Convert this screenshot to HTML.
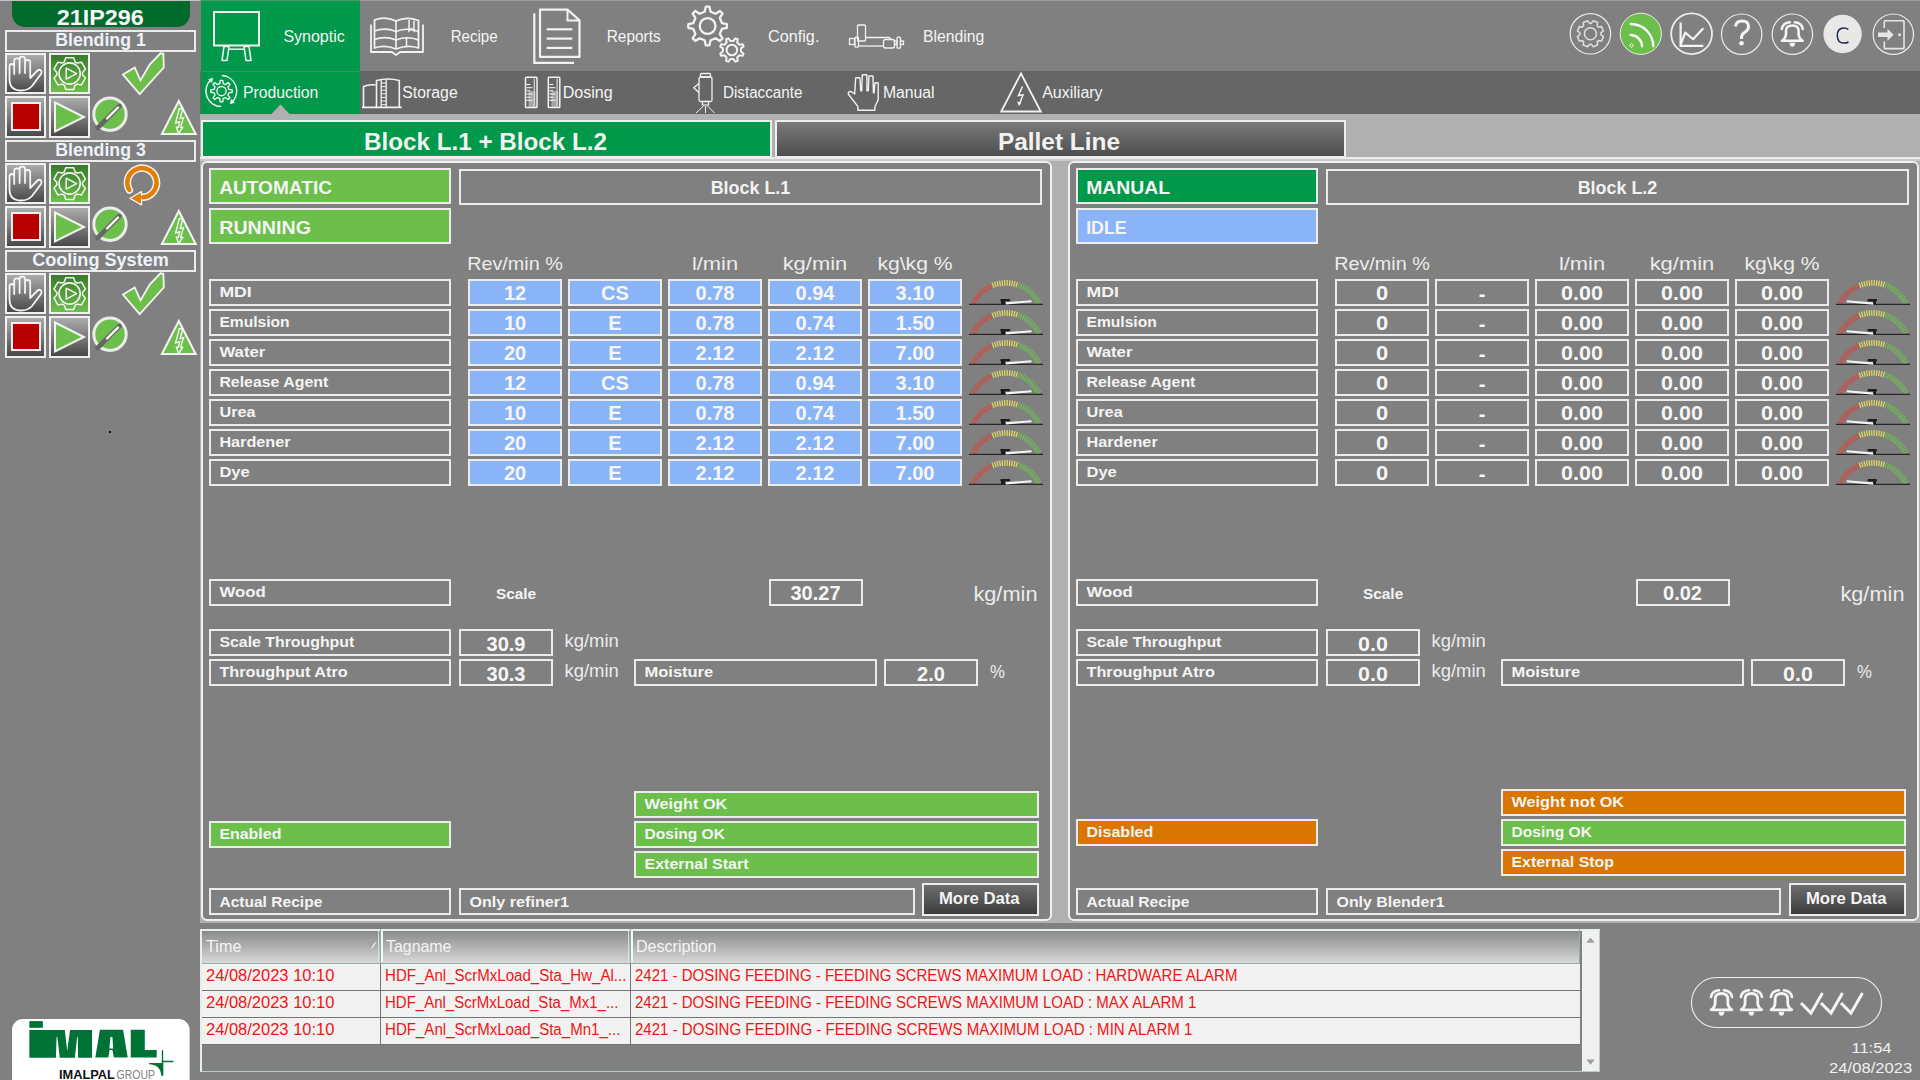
<!DOCTYPE html><html><head><meta charset="utf-8"><style>
*{margin:0;padding:0;box-sizing:border-box}
html,body{width:1920px;height:1080px;overflow:hidden;background:#808080;font-family:"Liberation Sans", sans-serif;}
.ab{position:absolute}
.bx{position:absolute;border:2px solid #ececec}
.blue{background:#8ab4f8}
.lg{background:#6cbf4a}
.dg{background:#00984a}
.or{background:#d97600}
.btn{position:absolute;border:2px solid #f0f0f0;background:linear-gradient(#acacac,#484848)}
svg text{font-family:"Liberation Sans";white-space:pre}
</style></head><body>

<div class="ab" style="left:200px;top:114px;width:1720px;height:809px;background:#b0b0b0"></div>
<div class="ab" style="left:200px;top:71px;width:1720px;height:43px;background:#666666"></div>
<div class="ab" style="left:0;top:0;width:200px;height:1px;background:#c2c2c2"></div>
<div class="ab" style="left:200px;top:0;width:1720px;height:1px;background:#9a9a9a"></div>
<div class="ab" style="left:201px;top:0;width:159px;height:1px;background:#50946c"></div>
<div class="ab" style="left:201px;top:1px;width:159px;height:70px;background:#00984a"></div>
<div class="ab" style="left:201px;top:71px;width:159px;height:1px;background:#4a8a5f"></div>
<div class="ab" style="left:201px;top:72px;width:159px;height:42px;background:#00984a"></div>
<svg class="ab" style="left:270px;top:104px" width="22" height="11"><polygon points="1,10.5 10.5,0.5 20,10.5" fill="#b0b0b0"/></svg>
<div class="ab" style="left:201px;top:120px;width:571px;height:38px;border:2px solid #eeeeee;background:#00984a"></div>
<div class="ab" style="left:775px;top:120px;width:571px;height:38px;border:2px solid #eeeeee;background:linear-gradient(#7a7a7a,#4e4e4e)"></div>
<div class="ab" style="left:200px;top:157px;width:1720px;height:2px;background:#ececec"></div>
<div class="ab" style="left:200px;top:159px;width:1720px;height:2px;background:#cacaca"></div>
<div class="ab" style="left:201px;top:161px;width:851px;height:760px;border:2px solid #efefef;border-radius:6px;background:#808080"></div>
<div class="ab" style="left:1068px;top:161px;width:851px;height:760px;border:2px solid #efefef;border-radius:6px;background:#808080"></div>
<div class="bx lg" style="left:209px;top:168px;width:242px;height:36px"></div>
<div class="bx lg" style="left:209px;top:208px;width:242px;height:36px"></div>
<div class="bx" style="left:459px;top:169px;width:583px;height:36px"></div>
<div class="bx" style="left:209px;top:279px;width:242px;height:27px"></div>
<div class="bx blue" style="left:468px;top:279px;width:94px;height:27px"></div>
<div class="bx blue" style="left:568px;top:279px;width:94px;height:27px"></div>
<div class="bx blue" style="left:668px;top:279px;width:94px;height:27px"></div>
<div class="bx blue" style="left:768px;top:279px;width:94px;height:27px"></div>
<div class="bx blue" style="left:868px;top:279px;width:94px;height:27px"></div>
<div class="bx" style="left:209px;top:309px;width:242px;height:27px"></div>
<div class="bx blue" style="left:468px;top:309px;width:94px;height:27px"></div>
<div class="bx blue" style="left:568px;top:309px;width:94px;height:27px"></div>
<div class="bx blue" style="left:668px;top:309px;width:94px;height:27px"></div>
<div class="bx blue" style="left:768px;top:309px;width:94px;height:27px"></div>
<div class="bx blue" style="left:868px;top:309px;width:94px;height:27px"></div>
<div class="bx" style="left:209px;top:339px;width:242px;height:27px"></div>
<div class="bx blue" style="left:468px;top:339px;width:94px;height:27px"></div>
<div class="bx blue" style="left:568px;top:339px;width:94px;height:27px"></div>
<div class="bx blue" style="left:668px;top:339px;width:94px;height:27px"></div>
<div class="bx blue" style="left:768px;top:339px;width:94px;height:27px"></div>
<div class="bx blue" style="left:868px;top:339px;width:94px;height:27px"></div>
<div class="bx" style="left:209px;top:369px;width:242px;height:27px"></div>
<div class="bx blue" style="left:468px;top:369px;width:94px;height:27px"></div>
<div class="bx blue" style="left:568px;top:369px;width:94px;height:27px"></div>
<div class="bx blue" style="left:668px;top:369px;width:94px;height:27px"></div>
<div class="bx blue" style="left:768px;top:369px;width:94px;height:27px"></div>
<div class="bx blue" style="left:868px;top:369px;width:94px;height:27px"></div>
<div class="bx" style="left:209px;top:399px;width:242px;height:27px"></div>
<div class="bx blue" style="left:468px;top:399px;width:94px;height:27px"></div>
<div class="bx blue" style="left:568px;top:399px;width:94px;height:27px"></div>
<div class="bx blue" style="left:668px;top:399px;width:94px;height:27px"></div>
<div class="bx blue" style="left:768px;top:399px;width:94px;height:27px"></div>
<div class="bx blue" style="left:868px;top:399px;width:94px;height:27px"></div>
<div class="bx" style="left:209px;top:429px;width:242px;height:27px"></div>
<div class="bx blue" style="left:468px;top:429px;width:94px;height:27px"></div>
<div class="bx blue" style="left:568px;top:429px;width:94px;height:27px"></div>
<div class="bx blue" style="left:668px;top:429px;width:94px;height:27px"></div>
<div class="bx blue" style="left:768px;top:429px;width:94px;height:27px"></div>
<div class="bx blue" style="left:868px;top:429px;width:94px;height:27px"></div>
<div class="bx" style="left:209px;top:459px;width:242px;height:27px"></div>
<div class="bx blue" style="left:468px;top:459px;width:94px;height:27px"></div>
<div class="bx blue" style="left:568px;top:459px;width:94px;height:27px"></div>
<div class="bx blue" style="left:668px;top:459px;width:94px;height:27px"></div>
<div class="bx blue" style="left:768px;top:459px;width:94px;height:27px"></div>
<div class="bx blue" style="left:868px;top:459px;width:94px;height:27px"></div>
<div class="bx" style="left:209px;top:579px;width:242px;height:27px"></div>
<div class="bx" style="left:769px;top:579px;width:94px;height:27px"></div>
<div class="bx" style="left:209px;top:629px;width:242px;height:27px"></div>
<div class="bx" style="left:459px;top:629px;width:94px;height:27px"></div>
<div class="bx" style="left:209px;top:659px;width:242px;height:27px"></div>
<div class="bx" style="left:459px;top:659px;width:94px;height:27px"></div>
<div class="bx" style="left:634px;top:659px;width:243px;height:27px"></div>
<div class="bx" style="left:884px;top:659px;width:94px;height:27px"></div>
<div class="bx lg" style="left:634px;top:791px;width:405px;height:27px"></div>
<div class="bx lg" style="left:634px;top:821px;width:405px;height:27px"></div>
<div class="bx lg" style="left:634px;top:851px;width:405px;height:27px"></div>
<div class="bx lg" style="left:209px;top:821px;width:242px;height:27px"></div>
<div class="bx" style="left:209px;top:888px;width:242px;height:27px"></div>
<div class="bx" style="left:459px;top:888px;width:456px;height:27px"></div>
<div class="bx" style="left:922px;top:883px;width:117px;height:33px;background:linear-gradient(#6e6e6e,#3c3c3c)"></div>
<div class="bx dg" style="left:1076px;top:168px;width:242px;height:36px"></div>
<div class="bx blue" style="left:1076px;top:208px;width:242px;height:36px"></div>
<div class="bx" style="left:1326px;top:169px;width:583px;height:36px"></div>
<div class="bx" style="left:1076px;top:279px;width:242px;height:27px"></div>
<div class="bx " style="left:1335px;top:279px;width:94px;height:27px"></div>
<div class="bx " style="left:1435px;top:279px;width:94px;height:27px"></div>
<div class="bx " style="left:1535px;top:279px;width:94px;height:27px"></div>
<div class="bx " style="left:1635px;top:279px;width:94px;height:27px"></div>
<div class="bx " style="left:1735px;top:279px;width:94px;height:27px"></div>
<div class="bx" style="left:1076px;top:309px;width:242px;height:27px"></div>
<div class="bx " style="left:1335px;top:309px;width:94px;height:27px"></div>
<div class="bx " style="left:1435px;top:309px;width:94px;height:27px"></div>
<div class="bx " style="left:1535px;top:309px;width:94px;height:27px"></div>
<div class="bx " style="left:1635px;top:309px;width:94px;height:27px"></div>
<div class="bx " style="left:1735px;top:309px;width:94px;height:27px"></div>
<div class="bx" style="left:1076px;top:339px;width:242px;height:27px"></div>
<div class="bx " style="left:1335px;top:339px;width:94px;height:27px"></div>
<div class="bx " style="left:1435px;top:339px;width:94px;height:27px"></div>
<div class="bx " style="left:1535px;top:339px;width:94px;height:27px"></div>
<div class="bx " style="left:1635px;top:339px;width:94px;height:27px"></div>
<div class="bx " style="left:1735px;top:339px;width:94px;height:27px"></div>
<div class="bx" style="left:1076px;top:369px;width:242px;height:27px"></div>
<div class="bx " style="left:1335px;top:369px;width:94px;height:27px"></div>
<div class="bx " style="left:1435px;top:369px;width:94px;height:27px"></div>
<div class="bx " style="left:1535px;top:369px;width:94px;height:27px"></div>
<div class="bx " style="left:1635px;top:369px;width:94px;height:27px"></div>
<div class="bx " style="left:1735px;top:369px;width:94px;height:27px"></div>
<div class="bx" style="left:1076px;top:399px;width:242px;height:27px"></div>
<div class="bx " style="left:1335px;top:399px;width:94px;height:27px"></div>
<div class="bx " style="left:1435px;top:399px;width:94px;height:27px"></div>
<div class="bx " style="left:1535px;top:399px;width:94px;height:27px"></div>
<div class="bx " style="left:1635px;top:399px;width:94px;height:27px"></div>
<div class="bx " style="left:1735px;top:399px;width:94px;height:27px"></div>
<div class="bx" style="left:1076px;top:429px;width:242px;height:27px"></div>
<div class="bx " style="left:1335px;top:429px;width:94px;height:27px"></div>
<div class="bx " style="left:1435px;top:429px;width:94px;height:27px"></div>
<div class="bx " style="left:1535px;top:429px;width:94px;height:27px"></div>
<div class="bx " style="left:1635px;top:429px;width:94px;height:27px"></div>
<div class="bx " style="left:1735px;top:429px;width:94px;height:27px"></div>
<div class="bx" style="left:1076px;top:459px;width:242px;height:27px"></div>
<div class="bx " style="left:1335px;top:459px;width:94px;height:27px"></div>
<div class="bx " style="left:1435px;top:459px;width:94px;height:27px"></div>
<div class="bx " style="left:1535px;top:459px;width:94px;height:27px"></div>
<div class="bx " style="left:1635px;top:459px;width:94px;height:27px"></div>
<div class="bx " style="left:1735px;top:459px;width:94px;height:27px"></div>
<div class="bx" style="left:1076px;top:579px;width:242px;height:27px"></div>
<div class="bx" style="left:1636px;top:579px;width:94px;height:27px"></div>
<div class="bx" style="left:1076px;top:629px;width:242px;height:27px"></div>
<div class="bx" style="left:1326px;top:629px;width:94px;height:27px"></div>
<div class="bx" style="left:1076px;top:659px;width:242px;height:27px"></div>
<div class="bx" style="left:1326px;top:659px;width:94px;height:27px"></div>
<div class="bx" style="left:1501px;top:659px;width:243px;height:27px"></div>
<div class="bx" style="left:1751px;top:659px;width:94px;height:27px"></div>
<div class="bx or" style="left:1501px;top:789px;width:405px;height:27px"></div>
<div class="bx lg" style="left:1501px;top:819px;width:405px;height:27px"></div>
<div class="bx or" style="left:1501px;top:849px;width:405px;height:27px"></div>
<div class="bx or" style="left:1076px;top:819px;width:242px;height:27px"></div>
<div class="bx" style="left:1076px;top:888px;width:242px;height:27px"></div>
<div class="bx" style="left:1326px;top:888px;width:455px;height:27px"></div>
<div class="bx" style="left:1789px;top:883px;width:117px;height:33px;background:linear-gradient(#6e6e6e,#3c3c3c)"></div>
<div class="ab" style="left:12px;top:1px;width:178px;height:26px;background:#006b2c;border-radius:0 0 13px 13px"></div>
<div class="ab" style="left:5px;top:30px;width:191px;height:22px;border:2px solid #ececec"></div>
<div class="btn" style="left:5px;top:53px;width:41px;height:41px"></div>
<div class="ab" style="left:49px;top:53px;width:41px;height:41px;border:2px solid #f0f0f0;background:linear-gradient(#3b7a2c,#6cbf4a)"></div>
<div class="btn" style="left:5px;top:96px;width:41px;height:41.5px"></div>
<div class="ab" style="left:10.5px;top:102px;width:30px;height:29px;border:2px solid #f0f0f0;background:#b80000"></div>
<div class="btn" style="left:49px;top:96px;width:41px;height:41.5px"></div>
<div class="ab" style="left:5px;top:140px;width:191px;height:22px;border:2px solid #ececec"></div>
<div class="btn" style="left:5px;top:163px;width:41px;height:41px"></div>
<div class="ab" style="left:49px;top:163px;width:41px;height:41px;border:2px solid #f0f0f0;background:linear-gradient(#3b7a2c,#6cbf4a)"></div>
<div class="btn" style="left:5px;top:206px;width:41px;height:41.5px"></div>
<div class="ab" style="left:10.5px;top:212px;width:30px;height:29px;border:2px solid #f0f0f0;background:#b80000"></div>
<div class="btn" style="left:49px;top:206px;width:41px;height:41.5px"></div>
<div class="ab" style="left:5px;top:250px;width:191px;height:22px;border:2px solid #ececec"></div>
<div class="btn" style="left:5px;top:273px;width:41px;height:41px"></div>
<div class="ab" style="left:49px;top:273px;width:41px;height:41px;border:2px solid #f0f0f0;background:linear-gradient(#3b7a2c,#6cbf4a)"></div>
<div class="btn" style="left:5px;top:316px;width:41px;height:41.5px"></div>
<div class="ab" style="left:10.5px;top:322px;width:30px;height:29px;border:2px solid #f0f0f0;background:#b80000"></div>
<div class="btn" style="left:49px;top:316px;width:41px;height:41.5px"></div>
<div class="ab" style="left:109px;top:431px;width:2px;height:2px;background:#111"></div>
<div class="ab" style="left:200px;top:929px;width:1400px;height:143px;border:2px solid #e6eeee;border-right:1px solid #b8cccc;border-bottom:1px solid #b8cccc;background:#808080"></div>
<div class="ab" style="left:202px;top:931px;width:1378px;height:32px;background:linear-gradient(#8a8a8a,#d8d8d8)"></div>
<div class="ab" style="left:202px;top:963px;width:1378px;height:1px;background:#8fb0b0"></div>
<div class="ab" style="left:378px;top:931px;width:1px;height:31px;background:#dedede"></div>
<div class="ab" style="left:380px;top:929px;width:1px;height:34px;background:#8fb0b0"></div>
<div class="ab" style="left:381px;top:931px;width:1.5px;height:31px;background:#f4f8f8"></div>
<div class="ab" style="left:628px;top:931px;width:1px;height:31px;background:#dedede"></div>
<div class="ab" style="left:630px;top:929px;width:1px;height:34px;background:#8fb0b0"></div>
<div class="ab" style="left:631px;top:931px;width:1.5px;height:31px;background:#f4f8f8"></div>
<div class="ab" style="left:1579px;top:929px;width:1px;height:34px;background:#8fb0b0"></div>
<div class="ab" style="left:202px;top:964px;width:1378px;height:27px;background:#f2f2f2;border-bottom:1px solid #747474"></div>
<div class="ab" style="left:380px;top:964px;width:1px;height:27px;background:#747474"></div>
<div class="ab" style="left:630px;top:964px;width:1px;height:27px;background:#747474"></div>
<div class="ab" style="left:202px;top:991px;width:1378px;height:27px;background:#f2f2f2;border-bottom:1px solid #747474"></div>
<div class="ab" style="left:380px;top:991px;width:1px;height:27px;background:#747474"></div>
<div class="ab" style="left:630px;top:991px;width:1px;height:27px;background:#747474"></div>
<div class="ab" style="left:202px;top:1018px;width:1378px;height:27px;background:#f2f2f2;border-bottom:1px solid #747474"></div>
<div class="ab" style="left:380px;top:1018px;width:1px;height:27px;background:#747474"></div>
<div class="ab" style="left:630px;top:1018px;width:1px;height:27px;background:#747474"></div>
<div class="ab" style="left:1582px;top:931px;width:17px;height:140px;background:#f0f0f0"></div>
<svg class="ab" style="left:1582px;top:931px" width="17" height="141"><polygon points="4.3,11.8 8.5,6.6 12.7,11.8" fill="#a0a0a0"/><polygon points="4.3,128.6 8.5,133.8 12.7,128.6" fill="#a0a0a0"/></svg>
<svg class="ab" style="left:0;top:0" width="1920" height="1080" viewBox="0 0 1920 1080">
<text x="485.5" y="149.5" font-size="24" font-weight="bold" fill="#f2f2f2" text-anchor="middle" textLength="243.2" lengthAdjust="spacingAndGlyphs">Block L.1 + Block L.2</text>
<text x="1059.0" y="149.5" font-size="24" font-weight="bold" fill="#f2f2f2" text-anchor="middle" textLength="122.2" lengthAdjust="spacingAndGlyphs">Pallet Line</text>
<text x="219.2" y="193.8" font-size="18.5" font-weight="bold" fill="#f4f4f4" textLength="112.8" lengthAdjust="spacingAndGlyphs">AUTOMATIC</text>
<text x="219.2" y="233.8" font-size="18.5" font-weight="bold" fill="#f4f4f4" textLength="91.8" lengthAdjust="spacingAndGlyphs">RUNNING</text>
<text x="750.5" y="193.8" font-size="18" font-weight="bold" fill="#f2f2f2" text-anchor="middle" textLength="79.6" lengthAdjust="spacingAndGlyphs">Block L.1</text>
<text x="515.0" y="270.0" font-size="18.5" font-weight="normal" fill="#ececec" text-anchor="middle" textLength="95.7" lengthAdjust="spacingAndGlyphs">Rev/min %</text>
<text x="715.0" y="270.0" font-size="18.5" font-weight="normal" fill="#ececec" text-anchor="middle" textLength="46.2" lengthAdjust="spacingAndGlyphs">l/min</text>
<text x="815.0" y="270.0" font-size="18.5" font-weight="normal" fill="#ececec" text-anchor="middle" textLength="64.7" lengthAdjust="spacingAndGlyphs">kg/min</text>
<text x="915.0" y="270.0" font-size="18.5" font-weight="normal" fill="#ececec" text-anchor="middle" textLength="75.2" lengthAdjust="spacingAndGlyphs">kg\kg %</text>
<text x="219.4" y="297.0" font-size="15" font-weight="bold" fill="#f4f4f4" textLength="32.3" lengthAdjust="spacingAndGlyphs">MDI</text>
<text x="515.0" y="299.7" font-size="20" font-weight="bold" fill="#f6f6f6" text-anchor="middle">12</text>
<text x="615.0" y="299.7" font-size="20" font-weight="bold" fill="#f6f6f6" text-anchor="middle">CS</text>
<text x="715.0" y="299.7" font-size="20" font-weight="bold" fill="#f6f6f6" text-anchor="middle">0.78</text>
<text x="815.0" y="299.7" font-size="20" font-weight="bold" fill="#f6f6f6" text-anchor="middle">0.94</text>
<text x="915.0" y="299.7" font-size="20" font-weight="bold" fill="#f6f6f6" text-anchor="middle">3.10</text>
<g transform="translate(968,278)"><line x1="3.04" y1="23.11" x2="7.98" y2="25.74" stroke="#d8443a" stroke-width="1.15"/><line x1="4.33" y1="20.86" x2="9.09" y2="23.80" stroke="#d8443a" stroke-width="1.15"/><line x1="5.77" y1="18.70" x2="10.33" y2="21.95" stroke="#d8443a" stroke-width="1.15"/><line x1="7.34" y1="16.63" x2="11.68" y2="20.18" stroke="#d8443a" stroke-width="1.15"/><line x1="9.05" y1="14.68" x2="13.15" y2="18.50" stroke="#d8443a" stroke-width="1.15"/><line x1="10.89" y1="12.84" x2="14.72" y2="16.92" stroke="#d8443a" stroke-width="1.15"/><line x1="12.84" y1="11.12" x2="16.39" y2="15.45" stroke="#d8443a" stroke-width="1.15"/><line x1="14.89" y1="9.54" x2="18.16" y2="14.09" stroke="#d8443a" stroke-width="1.15"/><line x1="17.05" y1="8.10" x2="20.01" y2="12.85" stroke="#d8443a" stroke-width="1.15"/><line x1="19.30" y1="6.79" x2="21.94" y2="11.73" stroke="#d8443a" stroke-width="1.15"/><line x1="21.63" y1="5.64" x2="23.94" y2="10.74" stroke="#d8443a" stroke-width="1.15"/><line x1="24.02" y1="4.65" x2="26.00" y2="9.89" stroke="#e9df5c" stroke-width="1.15"/><line x1="26.48" y1="3.81" x2="28.11" y2="9.17" stroke="#e9df5c" stroke-width="1.15"/><line x1="28.99" y1="3.14" x2="30.26" y2="8.59" stroke="#e9df5c" stroke-width="1.15"/><line x1="31.54" y1="2.63" x2="32.45" y2="8.16" stroke="#e9df5c" stroke-width="1.15"/><line x1="34.11" y1="2.29" x2="34.66" y2="7.86" stroke="#e9df5c" stroke-width="1.15"/><line x1="36.70" y1="2.12" x2="36.89" y2="7.72" stroke="#e9df5c" stroke-width="1.15"/><line x1="39.30" y1="2.12" x2="39.11" y2="7.72" stroke="#e9df5c" stroke-width="1.15"/><line x1="41.89" y1="2.29" x2="41.34" y2="7.86" stroke="#e9df5c" stroke-width="1.15"/><line x1="44.46" y1="2.63" x2="43.55" y2="8.16" stroke="#e9df5c" stroke-width="1.15"/><line x1="47.01" y1="3.14" x2="45.74" y2="8.59" stroke="#e9df5c" stroke-width="1.15"/><line x1="49.52" y1="3.81" x2="47.89" y2="9.17" stroke="#e9df5c" stroke-width="1.15"/><line x1="51.98" y1="4.65" x2="50.00" y2="9.89" stroke="#6cc44e" stroke-width="1.15"/><line x1="54.37" y1="5.64" x2="52.06" y2="10.74" stroke="#6cc44e" stroke-width="1.15"/><line x1="56.70" y1="6.79" x2="54.06" y2="11.73" stroke="#6cc44e" stroke-width="1.15"/><line x1="58.95" y1="8.10" x2="55.99" y2="12.85" stroke="#6cc44e" stroke-width="1.15"/><line x1="61.11" y1="9.54" x2="57.84" y2="14.09" stroke="#6cc44e" stroke-width="1.15"/><line x1="63.16" y1="11.12" x2="59.61" y2="15.45" stroke="#6cc44e" stroke-width="1.15"/><line x1="65.11" y1="12.84" x2="61.28" y2="16.92" stroke="#6cc44e" stroke-width="1.15"/><line x1="66.95" y1="14.68" x2="62.85" y2="18.50" stroke="#6cc44e" stroke-width="1.15"/><line x1="68.66" y1="16.63" x2="64.32" y2="20.18" stroke="#6cc44e" stroke-width="1.15"/><line x1="70.23" y1="18.70" x2="65.67" y2="21.95" stroke="#6cc44e" stroke-width="1.15"/><line x1="71.67" y1="20.86" x2="66.91" y2="23.80" stroke="#6cc44e" stroke-width="1.15"/><line x1="72.96" y1="23.11" x2="68.02" y2="25.74" stroke="#6cc44e" stroke-width="1.15"/><line x1="1" y1="26.4" x2="75" y2="26.4" stroke="#262626" stroke-width="1.3"/><path d="M37.5 24.3 L63.4 22.2 L63.6 24.2 L37.8 26.5 Z" fill="#f4f4f4"/><path d="M32 22 L33 21 L41.5 21 L42.5 22.2 L41.5 23.3 L37.3 23.3 L37.3 26 L33 26 L33 23.3 L32.5 23 Z" fill="#1c1c1c"/></g>
<text x="219.4" y="327.0" font-size="15" font-weight="bold" fill="#f4f4f4" textLength="70.2" lengthAdjust="spacingAndGlyphs">Emulsion</text>
<text x="515.0" y="329.7" font-size="20" font-weight="bold" fill="#f6f6f6" text-anchor="middle">10</text>
<text x="615.0" y="329.7" font-size="20" font-weight="bold" fill="#f6f6f6" text-anchor="middle">E</text>
<text x="715.0" y="329.7" font-size="20" font-weight="bold" fill="#f6f6f6" text-anchor="middle">0.78</text>
<text x="815.0" y="329.7" font-size="20" font-weight="bold" fill="#f6f6f6" text-anchor="middle">0.74</text>
<text x="915.0" y="329.7" font-size="20" font-weight="bold" fill="#f6f6f6" text-anchor="middle">1.50</text>
<g transform="translate(968,308)"><line x1="3.04" y1="23.11" x2="7.98" y2="25.74" stroke="#d8443a" stroke-width="1.15"/><line x1="4.33" y1="20.86" x2="9.09" y2="23.80" stroke="#d8443a" stroke-width="1.15"/><line x1="5.77" y1="18.70" x2="10.33" y2="21.95" stroke="#d8443a" stroke-width="1.15"/><line x1="7.34" y1="16.63" x2="11.68" y2="20.18" stroke="#d8443a" stroke-width="1.15"/><line x1="9.05" y1="14.68" x2="13.15" y2="18.50" stroke="#d8443a" stroke-width="1.15"/><line x1="10.89" y1="12.84" x2="14.72" y2="16.92" stroke="#d8443a" stroke-width="1.15"/><line x1="12.84" y1="11.12" x2="16.39" y2="15.45" stroke="#d8443a" stroke-width="1.15"/><line x1="14.89" y1="9.54" x2="18.16" y2="14.09" stroke="#d8443a" stroke-width="1.15"/><line x1="17.05" y1="8.10" x2="20.01" y2="12.85" stroke="#d8443a" stroke-width="1.15"/><line x1="19.30" y1="6.79" x2="21.94" y2="11.73" stroke="#d8443a" stroke-width="1.15"/><line x1="21.63" y1="5.64" x2="23.94" y2="10.74" stroke="#d8443a" stroke-width="1.15"/><line x1="24.02" y1="4.65" x2="26.00" y2="9.89" stroke="#e9df5c" stroke-width="1.15"/><line x1="26.48" y1="3.81" x2="28.11" y2="9.17" stroke="#e9df5c" stroke-width="1.15"/><line x1="28.99" y1="3.14" x2="30.26" y2="8.59" stroke="#e9df5c" stroke-width="1.15"/><line x1="31.54" y1="2.63" x2="32.45" y2="8.16" stroke="#e9df5c" stroke-width="1.15"/><line x1="34.11" y1="2.29" x2="34.66" y2="7.86" stroke="#e9df5c" stroke-width="1.15"/><line x1="36.70" y1="2.12" x2="36.89" y2="7.72" stroke="#e9df5c" stroke-width="1.15"/><line x1="39.30" y1="2.12" x2="39.11" y2="7.72" stroke="#e9df5c" stroke-width="1.15"/><line x1="41.89" y1="2.29" x2="41.34" y2="7.86" stroke="#e9df5c" stroke-width="1.15"/><line x1="44.46" y1="2.63" x2="43.55" y2="8.16" stroke="#e9df5c" stroke-width="1.15"/><line x1="47.01" y1="3.14" x2="45.74" y2="8.59" stroke="#e9df5c" stroke-width="1.15"/><line x1="49.52" y1="3.81" x2="47.89" y2="9.17" stroke="#e9df5c" stroke-width="1.15"/><line x1="51.98" y1="4.65" x2="50.00" y2="9.89" stroke="#6cc44e" stroke-width="1.15"/><line x1="54.37" y1="5.64" x2="52.06" y2="10.74" stroke="#6cc44e" stroke-width="1.15"/><line x1="56.70" y1="6.79" x2="54.06" y2="11.73" stroke="#6cc44e" stroke-width="1.15"/><line x1="58.95" y1="8.10" x2="55.99" y2="12.85" stroke="#6cc44e" stroke-width="1.15"/><line x1="61.11" y1="9.54" x2="57.84" y2="14.09" stroke="#6cc44e" stroke-width="1.15"/><line x1="63.16" y1="11.12" x2="59.61" y2="15.45" stroke="#6cc44e" stroke-width="1.15"/><line x1="65.11" y1="12.84" x2="61.28" y2="16.92" stroke="#6cc44e" stroke-width="1.15"/><line x1="66.95" y1="14.68" x2="62.85" y2="18.50" stroke="#6cc44e" stroke-width="1.15"/><line x1="68.66" y1="16.63" x2="64.32" y2="20.18" stroke="#6cc44e" stroke-width="1.15"/><line x1="70.23" y1="18.70" x2="65.67" y2="21.95" stroke="#6cc44e" stroke-width="1.15"/><line x1="71.67" y1="20.86" x2="66.91" y2="23.80" stroke="#6cc44e" stroke-width="1.15"/><line x1="72.96" y1="23.11" x2="68.02" y2="25.74" stroke="#6cc44e" stroke-width="1.15"/><line x1="1" y1="26.4" x2="75" y2="26.4" stroke="#262626" stroke-width="1.3"/><path d="M37.5 24.3 L63.4 22.2 L63.6 24.2 L37.8 26.5 Z" fill="#f4f4f4"/><path d="M32 22 L33 21 L41.5 21 L42.5 22.2 L41.5 23.3 L37.3 23.3 L37.3 26 L33 26 L33 23.3 L32.5 23 Z" fill="#1c1c1c"/></g>
<text x="219.4" y="357.0" font-size="15" font-weight="bold" fill="#f4f4f4" textLength="45.9" lengthAdjust="spacingAndGlyphs">Water</text>
<text x="515.0" y="359.7" font-size="20" font-weight="bold" fill="#f6f6f6" text-anchor="middle">20</text>
<text x="615.0" y="359.7" font-size="20" font-weight="bold" fill="#f6f6f6" text-anchor="middle">E</text>
<text x="715.0" y="359.7" font-size="20" font-weight="bold" fill="#f6f6f6" text-anchor="middle">2.12</text>
<text x="815.0" y="359.7" font-size="20" font-weight="bold" fill="#f6f6f6" text-anchor="middle">2.12</text>
<text x="915.0" y="359.7" font-size="20" font-weight="bold" fill="#f6f6f6" text-anchor="middle">7.00</text>
<g transform="translate(968,338)"><line x1="3.04" y1="23.11" x2="7.98" y2="25.74" stroke="#d8443a" stroke-width="1.15"/><line x1="4.33" y1="20.86" x2="9.09" y2="23.80" stroke="#d8443a" stroke-width="1.15"/><line x1="5.77" y1="18.70" x2="10.33" y2="21.95" stroke="#d8443a" stroke-width="1.15"/><line x1="7.34" y1="16.63" x2="11.68" y2="20.18" stroke="#d8443a" stroke-width="1.15"/><line x1="9.05" y1="14.68" x2="13.15" y2="18.50" stroke="#d8443a" stroke-width="1.15"/><line x1="10.89" y1="12.84" x2="14.72" y2="16.92" stroke="#d8443a" stroke-width="1.15"/><line x1="12.84" y1="11.12" x2="16.39" y2="15.45" stroke="#d8443a" stroke-width="1.15"/><line x1="14.89" y1="9.54" x2="18.16" y2="14.09" stroke="#d8443a" stroke-width="1.15"/><line x1="17.05" y1="8.10" x2="20.01" y2="12.85" stroke="#d8443a" stroke-width="1.15"/><line x1="19.30" y1="6.79" x2="21.94" y2="11.73" stroke="#d8443a" stroke-width="1.15"/><line x1="21.63" y1="5.64" x2="23.94" y2="10.74" stroke="#d8443a" stroke-width="1.15"/><line x1="24.02" y1="4.65" x2="26.00" y2="9.89" stroke="#e9df5c" stroke-width="1.15"/><line x1="26.48" y1="3.81" x2="28.11" y2="9.17" stroke="#e9df5c" stroke-width="1.15"/><line x1="28.99" y1="3.14" x2="30.26" y2="8.59" stroke="#e9df5c" stroke-width="1.15"/><line x1="31.54" y1="2.63" x2="32.45" y2="8.16" stroke="#e9df5c" stroke-width="1.15"/><line x1="34.11" y1="2.29" x2="34.66" y2="7.86" stroke="#e9df5c" stroke-width="1.15"/><line x1="36.70" y1="2.12" x2="36.89" y2="7.72" stroke="#e9df5c" stroke-width="1.15"/><line x1="39.30" y1="2.12" x2="39.11" y2="7.72" stroke="#e9df5c" stroke-width="1.15"/><line x1="41.89" y1="2.29" x2="41.34" y2="7.86" stroke="#e9df5c" stroke-width="1.15"/><line x1="44.46" y1="2.63" x2="43.55" y2="8.16" stroke="#e9df5c" stroke-width="1.15"/><line x1="47.01" y1="3.14" x2="45.74" y2="8.59" stroke="#e9df5c" stroke-width="1.15"/><line x1="49.52" y1="3.81" x2="47.89" y2="9.17" stroke="#e9df5c" stroke-width="1.15"/><line x1="51.98" y1="4.65" x2="50.00" y2="9.89" stroke="#6cc44e" stroke-width="1.15"/><line x1="54.37" y1="5.64" x2="52.06" y2="10.74" stroke="#6cc44e" stroke-width="1.15"/><line x1="56.70" y1="6.79" x2="54.06" y2="11.73" stroke="#6cc44e" stroke-width="1.15"/><line x1="58.95" y1="8.10" x2="55.99" y2="12.85" stroke="#6cc44e" stroke-width="1.15"/><line x1="61.11" y1="9.54" x2="57.84" y2="14.09" stroke="#6cc44e" stroke-width="1.15"/><line x1="63.16" y1="11.12" x2="59.61" y2="15.45" stroke="#6cc44e" stroke-width="1.15"/><line x1="65.11" y1="12.84" x2="61.28" y2="16.92" stroke="#6cc44e" stroke-width="1.15"/><line x1="66.95" y1="14.68" x2="62.85" y2="18.50" stroke="#6cc44e" stroke-width="1.15"/><line x1="68.66" y1="16.63" x2="64.32" y2="20.18" stroke="#6cc44e" stroke-width="1.15"/><line x1="70.23" y1="18.70" x2="65.67" y2="21.95" stroke="#6cc44e" stroke-width="1.15"/><line x1="71.67" y1="20.86" x2="66.91" y2="23.80" stroke="#6cc44e" stroke-width="1.15"/><line x1="72.96" y1="23.11" x2="68.02" y2="25.74" stroke="#6cc44e" stroke-width="1.15"/><line x1="1" y1="26.4" x2="75" y2="26.4" stroke="#262626" stroke-width="1.3"/><path d="M37.5 24.3 L63.4 22.2 L63.6 24.2 L37.8 26.5 Z" fill="#f4f4f4"/><path d="M32 22 L33 21 L41.5 21 L42.5 22.2 L41.5 23.3 L37.3 23.3 L37.3 26 L33 26 L33 23.3 L32.5 23 Z" fill="#1c1c1c"/></g>
<text x="219.4" y="387.0" font-size="15" font-weight="bold" fill="#f4f4f4" textLength="108.9" lengthAdjust="spacingAndGlyphs">Release Agent</text>
<text x="515.0" y="389.7" font-size="20" font-weight="bold" fill="#f6f6f6" text-anchor="middle">12</text>
<text x="615.0" y="389.7" font-size="20" font-weight="bold" fill="#f6f6f6" text-anchor="middle">CS</text>
<text x="715.0" y="389.7" font-size="20" font-weight="bold" fill="#f6f6f6" text-anchor="middle">0.78</text>
<text x="815.0" y="389.7" font-size="20" font-weight="bold" fill="#f6f6f6" text-anchor="middle">0.94</text>
<text x="915.0" y="389.7" font-size="20" font-weight="bold" fill="#f6f6f6" text-anchor="middle">3.10</text>
<g transform="translate(968,368)"><line x1="3.04" y1="23.11" x2="7.98" y2="25.74" stroke="#d8443a" stroke-width="1.15"/><line x1="4.33" y1="20.86" x2="9.09" y2="23.80" stroke="#d8443a" stroke-width="1.15"/><line x1="5.77" y1="18.70" x2="10.33" y2="21.95" stroke="#d8443a" stroke-width="1.15"/><line x1="7.34" y1="16.63" x2="11.68" y2="20.18" stroke="#d8443a" stroke-width="1.15"/><line x1="9.05" y1="14.68" x2="13.15" y2="18.50" stroke="#d8443a" stroke-width="1.15"/><line x1="10.89" y1="12.84" x2="14.72" y2="16.92" stroke="#d8443a" stroke-width="1.15"/><line x1="12.84" y1="11.12" x2="16.39" y2="15.45" stroke="#d8443a" stroke-width="1.15"/><line x1="14.89" y1="9.54" x2="18.16" y2="14.09" stroke="#d8443a" stroke-width="1.15"/><line x1="17.05" y1="8.10" x2="20.01" y2="12.85" stroke="#d8443a" stroke-width="1.15"/><line x1="19.30" y1="6.79" x2="21.94" y2="11.73" stroke="#d8443a" stroke-width="1.15"/><line x1="21.63" y1="5.64" x2="23.94" y2="10.74" stroke="#d8443a" stroke-width="1.15"/><line x1="24.02" y1="4.65" x2="26.00" y2="9.89" stroke="#e9df5c" stroke-width="1.15"/><line x1="26.48" y1="3.81" x2="28.11" y2="9.17" stroke="#e9df5c" stroke-width="1.15"/><line x1="28.99" y1="3.14" x2="30.26" y2="8.59" stroke="#e9df5c" stroke-width="1.15"/><line x1="31.54" y1="2.63" x2="32.45" y2="8.16" stroke="#e9df5c" stroke-width="1.15"/><line x1="34.11" y1="2.29" x2="34.66" y2="7.86" stroke="#e9df5c" stroke-width="1.15"/><line x1="36.70" y1="2.12" x2="36.89" y2="7.72" stroke="#e9df5c" stroke-width="1.15"/><line x1="39.30" y1="2.12" x2="39.11" y2="7.72" stroke="#e9df5c" stroke-width="1.15"/><line x1="41.89" y1="2.29" x2="41.34" y2="7.86" stroke="#e9df5c" stroke-width="1.15"/><line x1="44.46" y1="2.63" x2="43.55" y2="8.16" stroke="#e9df5c" stroke-width="1.15"/><line x1="47.01" y1="3.14" x2="45.74" y2="8.59" stroke="#e9df5c" stroke-width="1.15"/><line x1="49.52" y1="3.81" x2="47.89" y2="9.17" stroke="#e9df5c" stroke-width="1.15"/><line x1="51.98" y1="4.65" x2="50.00" y2="9.89" stroke="#6cc44e" stroke-width="1.15"/><line x1="54.37" y1="5.64" x2="52.06" y2="10.74" stroke="#6cc44e" stroke-width="1.15"/><line x1="56.70" y1="6.79" x2="54.06" y2="11.73" stroke="#6cc44e" stroke-width="1.15"/><line x1="58.95" y1="8.10" x2="55.99" y2="12.85" stroke="#6cc44e" stroke-width="1.15"/><line x1="61.11" y1="9.54" x2="57.84" y2="14.09" stroke="#6cc44e" stroke-width="1.15"/><line x1="63.16" y1="11.12" x2="59.61" y2="15.45" stroke="#6cc44e" stroke-width="1.15"/><line x1="65.11" y1="12.84" x2="61.28" y2="16.92" stroke="#6cc44e" stroke-width="1.15"/><line x1="66.95" y1="14.68" x2="62.85" y2="18.50" stroke="#6cc44e" stroke-width="1.15"/><line x1="68.66" y1="16.63" x2="64.32" y2="20.18" stroke="#6cc44e" stroke-width="1.15"/><line x1="70.23" y1="18.70" x2="65.67" y2="21.95" stroke="#6cc44e" stroke-width="1.15"/><line x1="71.67" y1="20.86" x2="66.91" y2="23.80" stroke="#6cc44e" stroke-width="1.15"/><line x1="72.96" y1="23.11" x2="68.02" y2="25.74" stroke="#6cc44e" stroke-width="1.15"/><line x1="1" y1="26.4" x2="75" y2="26.4" stroke="#262626" stroke-width="1.3"/><path d="M37.5 24.3 L63.4 22.2 L63.6 24.2 L37.8 26.5 Z" fill="#f4f4f4"/><path d="M32 22 L33 21 L41.5 21 L42.5 22.2 L41.5 23.3 L37.3 23.3 L37.3 26 L33 26 L33 23.3 L32.5 23 Z" fill="#1c1c1c"/></g>
<text x="219.4" y="417.0" font-size="15" font-weight="bold" fill="#f4f4f4" textLength="36.2" lengthAdjust="spacingAndGlyphs">Urea</text>
<text x="515.0" y="419.7" font-size="20" font-weight="bold" fill="#f6f6f6" text-anchor="middle">10</text>
<text x="615.0" y="419.7" font-size="20" font-weight="bold" fill="#f6f6f6" text-anchor="middle">E</text>
<text x="715.0" y="419.7" font-size="20" font-weight="bold" fill="#f6f6f6" text-anchor="middle">0.78</text>
<text x="815.0" y="419.7" font-size="20" font-weight="bold" fill="#f6f6f6" text-anchor="middle">0.74</text>
<text x="915.0" y="419.7" font-size="20" font-weight="bold" fill="#f6f6f6" text-anchor="middle">1.50</text>
<g transform="translate(968,398)"><line x1="3.04" y1="23.11" x2="7.98" y2="25.74" stroke="#d8443a" stroke-width="1.15"/><line x1="4.33" y1="20.86" x2="9.09" y2="23.80" stroke="#d8443a" stroke-width="1.15"/><line x1="5.77" y1="18.70" x2="10.33" y2="21.95" stroke="#d8443a" stroke-width="1.15"/><line x1="7.34" y1="16.63" x2="11.68" y2="20.18" stroke="#d8443a" stroke-width="1.15"/><line x1="9.05" y1="14.68" x2="13.15" y2="18.50" stroke="#d8443a" stroke-width="1.15"/><line x1="10.89" y1="12.84" x2="14.72" y2="16.92" stroke="#d8443a" stroke-width="1.15"/><line x1="12.84" y1="11.12" x2="16.39" y2="15.45" stroke="#d8443a" stroke-width="1.15"/><line x1="14.89" y1="9.54" x2="18.16" y2="14.09" stroke="#d8443a" stroke-width="1.15"/><line x1="17.05" y1="8.10" x2="20.01" y2="12.85" stroke="#d8443a" stroke-width="1.15"/><line x1="19.30" y1="6.79" x2="21.94" y2="11.73" stroke="#d8443a" stroke-width="1.15"/><line x1="21.63" y1="5.64" x2="23.94" y2="10.74" stroke="#d8443a" stroke-width="1.15"/><line x1="24.02" y1="4.65" x2="26.00" y2="9.89" stroke="#e9df5c" stroke-width="1.15"/><line x1="26.48" y1="3.81" x2="28.11" y2="9.17" stroke="#e9df5c" stroke-width="1.15"/><line x1="28.99" y1="3.14" x2="30.26" y2="8.59" stroke="#e9df5c" stroke-width="1.15"/><line x1="31.54" y1="2.63" x2="32.45" y2="8.16" stroke="#e9df5c" stroke-width="1.15"/><line x1="34.11" y1="2.29" x2="34.66" y2="7.86" stroke="#e9df5c" stroke-width="1.15"/><line x1="36.70" y1="2.12" x2="36.89" y2="7.72" stroke="#e9df5c" stroke-width="1.15"/><line x1="39.30" y1="2.12" x2="39.11" y2="7.72" stroke="#e9df5c" stroke-width="1.15"/><line x1="41.89" y1="2.29" x2="41.34" y2="7.86" stroke="#e9df5c" stroke-width="1.15"/><line x1="44.46" y1="2.63" x2="43.55" y2="8.16" stroke="#e9df5c" stroke-width="1.15"/><line x1="47.01" y1="3.14" x2="45.74" y2="8.59" stroke="#e9df5c" stroke-width="1.15"/><line x1="49.52" y1="3.81" x2="47.89" y2="9.17" stroke="#e9df5c" stroke-width="1.15"/><line x1="51.98" y1="4.65" x2="50.00" y2="9.89" stroke="#6cc44e" stroke-width="1.15"/><line x1="54.37" y1="5.64" x2="52.06" y2="10.74" stroke="#6cc44e" stroke-width="1.15"/><line x1="56.70" y1="6.79" x2="54.06" y2="11.73" stroke="#6cc44e" stroke-width="1.15"/><line x1="58.95" y1="8.10" x2="55.99" y2="12.85" stroke="#6cc44e" stroke-width="1.15"/><line x1="61.11" y1="9.54" x2="57.84" y2="14.09" stroke="#6cc44e" stroke-width="1.15"/><line x1="63.16" y1="11.12" x2="59.61" y2="15.45" stroke="#6cc44e" stroke-width="1.15"/><line x1="65.11" y1="12.84" x2="61.28" y2="16.92" stroke="#6cc44e" stroke-width="1.15"/><line x1="66.95" y1="14.68" x2="62.85" y2="18.50" stroke="#6cc44e" stroke-width="1.15"/><line x1="68.66" y1="16.63" x2="64.32" y2="20.18" stroke="#6cc44e" stroke-width="1.15"/><line x1="70.23" y1="18.70" x2="65.67" y2="21.95" stroke="#6cc44e" stroke-width="1.15"/><line x1="71.67" y1="20.86" x2="66.91" y2="23.80" stroke="#6cc44e" stroke-width="1.15"/><line x1="72.96" y1="23.11" x2="68.02" y2="25.74" stroke="#6cc44e" stroke-width="1.15"/><line x1="1" y1="26.4" x2="75" y2="26.4" stroke="#262626" stroke-width="1.3"/><path d="M37.5 24.3 L63.4 22.2 L63.6 24.2 L37.8 26.5 Z" fill="#f4f4f4"/><path d="M32 22 L33 21 L41.5 21 L42.5 22.2 L41.5 23.3 L37.3 23.3 L37.3 26 L33 26 L33 23.3 L32.5 23 Z" fill="#1c1c1c"/></g>
<text x="219.4" y="447.0" font-size="15" font-weight="bold" fill="#f4f4f4" textLength="71.2" lengthAdjust="spacingAndGlyphs">Hardener</text>
<text x="515.0" y="449.7" font-size="20" font-weight="bold" fill="#f6f6f6" text-anchor="middle">20</text>
<text x="615.0" y="449.7" font-size="20" font-weight="bold" fill="#f6f6f6" text-anchor="middle">E</text>
<text x="715.0" y="449.7" font-size="20" font-weight="bold" fill="#f6f6f6" text-anchor="middle">2.12</text>
<text x="815.0" y="449.7" font-size="20" font-weight="bold" fill="#f6f6f6" text-anchor="middle">2.12</text>
<text x="915.0" y="449.7" font-size="20" font-weight="bold" fill="#f6f6f6" text-anchor="middle">7.00</text>
<g transform="translate(968,428)"><line x1="3.04" y1="23.11" x2="7.98" y2="25.74" stroke="#d8443a" stroke-width="1.15"/><line x1="4.33" y1="20.86" x2="9.09" y2="23.80" stroke="#d8443a" stroke-width="1.15"/><line x1="5.77" y1="18.70" x2="10.33" y2="21.95" stroke="#d8443a" stroke-width="1.15"/><line x1="7.34" y1="16.63" x2="11.68" y2="20.18" stroke="#d8443a" stroke-width="1.15"/><line x1="9.05" y1="14.68" x2="13.15" y2="18.50" stroke="#d8443a" stroke-width="1.15"/><line x1="10.89" y1="12.84" x2="14.72" y2="16.92" stroke="#d8443a" stroke-width="1.15"/><line x1="12.84" y1="11.12" x2="16.39" y2="15.45" stroke="#d8443a" stroke-width="1.15"/><line x1="14.89" y1="9.54" x2="18.16" y2="14.09" stroke="#d8443a" stroke-width="1.15"/><line x1="17.05" y1="8.10" x2="20.01" y2="12.85" stroke="#d8443a" stroke-width="1.15"/><line x1="19.30" y1="6.79" x2="21.94" y2="11.73" stroke="#d8443a" stroke-width="1.15"/><line x1="21.63" y1="5.64" x2="23.94" y2="10.74" stroke="#d8443a" stroke-width="1.15"/><line x1="24.02" y1="4.65" x2="26.00" y2="9.89" stroke="#e9df5c" stroke-width="1.15"/><line x1="26.48" y1="3.81" x2="28.11" y2="9.17" stroke="#e9df5c" stroke-width="1.15"/><line x1="28.99" y1="3.14" x2="30.26" y2="8.59" stroke="#e9df5c" stroke-width="1.15"/><line x1="31.54" y1="2.63" x2="32.45" y2="8.16" stroke="#e9df5c" stroke-width="1.15"/><line x1="34.11" y1="2.29" x2="34.66" y2="7.86" stroke="#e9df5c" stroke-width="1.15"/><line x1="36.70" y1="2.12" x2="36.89" y2="7.72" stroke="#e9df5c" stroke-width="1.15"/><line x1="39.30" y1="2.12" x2="39.11" y2="7.72" stroke="#e9df5c" stroke-width="1.15"/><line x1="41.89" y1="2.29" x2="41.34" y2="7.86" stroke="#e9df5c" stroke-width="1.15"/><line x1="44.46" y1="2.63" x2="43.55" y2="8.16" stroke="#e9df5c" stroke-width="1.15"/><line x1="47.01" y1="3.14" x2="45.74" y2="8.59" stroke="#e9df5c" stroke-width="1.15"/><line x1="49.52" y1="3.81" x2="47.89" y2="9.17" stroke="#e9df5c" stroke-width="1.15"/><line x1="51.98" y1="4.65" x2="50.00" y2="9.89" stroke="#6cc44e" stroke-width="1.15"/><line x1="54.37" y1="5.64" x2="52.06" y2="10.74" stroke="#6cc44e" stroke-width="1.15"/><line x1="56.70" y1="6.79" x2="54.06" y2="11.73" stroke="#6cc44e" stroke-width="1.15"/><line x1="58.95" y1="8.10" x2="55.99" y2="12.85" stroke="#6cc44e" stroke-width="1.15"/><line x1="61.11" y1="9.54" x2="57.84" y2="14.09" stroke="#6cc44e" stroke-width="1.15"/><line x1="63.16" y1="11.12" x2="59.61" y2="15.45" stroke="#6cc44e" stroke-width="1.15"/><line x1="65.11" y1="12.84" x2="61.28" y2="16.92" stroke="#6cc44e" stroke-width="1.15"/><line x1="66.95" y1="14.68" x2="62.85" y2="18.50" stroke="#6cc44e" stroke-width="1.15"/><line x1="68.66" y1="16.63" x2="64.32" y2="20.18" stroke="#6cc44e" stroke-width="1.15"/><line x1="70.23" y1="18.70" x2="65.67" y2="21.95" stroke="#6cc44e" stroke-width="1.15"/><line x1="71.67" y1="20.86" x2="66.91" y2="23.80" stroke="#6cc44e" stroke-width="1.15"/><line x1="72.96" y1="23.11" x2="68.02" y2="25.74" stroke="#6cc44e" stroke-width="1.15"/><line x1="1" y1="26.4" x2="75" y2="26.4" stroke="#262626" stroke-width="1.3"/><path d="M37.5 24.3 L63.4 22.2 L63.6 24.2 L37.8 26.5 Z" fill="#f4f4f4"/><path d="M32 22 L33 21 L41.5 21 L42.5 22.2 L41.5 23.3 L37.3 23.3 L37.3 26 L33 26 L33 23.3 L32.5 23 Z" fill="#1c1c1c"/></g>
<text x="219.4" y="477.0" font-size="15" font-weight="bold" fill="#f4f4f4" textLength="30.3" lengthAdjust="spacingAndGlyphs">Dye</text>
<text x="515.0" y="479.7" font-size="20" font-weight="bold" fill="#f6f6f6" text-anchor="middle">20</text>
<text x="615.0" y="479.7" font-size="20" font-weight="bold" fill="#f6f6f6" text-anchor="middle">E</text>
<text x="715.0" y="479.7" font-size="20" font-weight="bold" fill="#f6f6f6" text-anchor="middle">2.12</text>
<text x="815.0" y="479.7" font-size="20" font-weight="bold" fill="#f6f6f6" text-anchor="middle">2.12</text>
<text x="915.0" y="479.7" font-size="20" font-weight="bold" fill="#f6f6f6" text-anchor="middle">7.00</text>
<g transform="translate(968,458)"><line x1="3.04" y1="23.11" x2="7.98" y2="25.74" stroke="#d8443a" stroke-width="1.15"/><line x1="4.33" y1="20.86" x2="9.09" y2="23.80" stroke="#d8443a" stroke-width="1.15"/><line x1="5.77" y1="18.70" x2="10.33" y2="21.95" stroke="#d8443a" stroke-width="1.15"/><line x1="7.34" y1="16.63" x2="11.68" y2="20.18" stroke="#d8443a" stroke-width="1.15"/><line x1="9.05" y1="14.68" x2="13.15" y2="18.50" stroke="#d8443a" stroke-width="1.15"/><line x1="10.89" y1="12.84" x2="14.72" y2="16.92" stroke="#d8443a" stroke-width="1.15"/><line x1="12.84" y1="11.12" x2="16.39" y2="15.45" stroke="#d8443a" stroke-width="1.15"/><line x1="14.89" y1="9.54" x2="18.16" y2="14.09" stroke="#d8443a" stroke-width="1.15"/><line x1="17.05" y1="8.10" x2="20.01" y2="12.85" stroke="#d8443a" stroke-width="1.15"/><line x1="19.30" y1="6.79" x2="21.94" y2="11.73" stroke="#d8443a" stroke-width="1.15"/><line x1="21.63" y1="5.64" x2="23.94" y2="10.74" stroke="#d8443a" stroke-width="1.15"/><line x1="24.02" y1="4.65" x2="26.00" y2="9.89" stroke="#e9df5c" stroke-width="1.15"/><line x1="26.48" y1="3.81" x2="28.11" y2="9.17" stroke="#e9df5c" stroke-width="1.15"/><line x1="28.99" y1="3.14" x2="30.26" y2="8.59" stroke="#e9df5c" stroke-width="1.15"/><line x1="31.54" y1="2.63" x2="32.45" y2="8.16" stroke="#e9df5c" stroke-width="1.15"/><line x1="34.11" y1="2.29" x2="34.66" y2="7.86" stroke="#e9df5c" stroke-width="1.15"/><line x1="36.70" y1="2.12" x2="36.89" y2="7.72" stroke="#e9df5c" stroke-width="1.15"/><line x1="39.30" y1="2.12" x2="39.11" y2="7.72" stroke="#e9df5c" stroke-width="1.15"/><line x1="41.89" y1="2.29" x2="41.34" y2="7.86" stroke="#e9df5c" stroke-width="1.15"/><line x1="44.46" y1="2.63" x2="43.55" y2="8.16" stroke="#e9df5c" stroke-width="1.15"/><line x1="47.01" y1="3.14" x2="45.74" y2="8.59" stroke="#e9df5c" stroke-width="1.15"/><line x1="49.52" y1="3.81" x2="47.89" y2="9.17" stroke="#e9df5c" stroke-width="1.15"/><line x1="51.98" y1="4.65" x2="50.00" y2="9.89" stroke="#6cc44e" stroke-width="1.15"/><line x1="54.37" y1="5.64" x2="52.06" y2="10.74" stroke="#6cc44e" stroke-width="1.15"/><line x1="56.70" y1="6.79" x2="54.06" y2="11.73" stroke="#6cc44e" stroke-width="1.15"/><line x1="58.95" y1="8.10" x2="55.99" y2="12.85" stroke="#6cc44e" stroke-width="1.15"/><line x1="61.11" y1="9.54" x2="57.84" y2="14.09" stroke="#6cc44e" stroke-width="1.15"/><line x1="63.16" y1="11.12" x2="59.61" y2="15.45" stroke="#6cc44e" stroke-width="1.15"/><line x1="65.11" y1="12.84" x2="61.28" y2="16.92" stroke="#6cc44e" stroke-width="1.15"/><line x1="66.95" y1="14.68" x2="62.85" y2="18.50" stroke="#6cc44e" stroke-width="1.15"/><line x1="68.66" y1="16.63" x2="64.32" y2="20.18" stroke="#6cc44e" stroke-width="1.15"/><line x1="70.23" y1="18.70" x2="65.67" y2="21.95" stroke="#6cc44e" stroke-width="1.15"/><line x1="71.67" y1="20.86" x2="66.91" y2="23.80" stroke="#6cc44e" stroke-width="1.15"/><line x1="72.96" y1="23.11" x2="68.02" y2="25.74" stroke="#6cc44e" stroke-width="1.15"/><line x1="1" y1="26.4" x2="75" y2="26.4" stroke="#262626" stroke-width="1.3"/><path d="M37.5 24.3 L63.4 22.2 L63.6 24.2 L37.8 26.5 Z" fill="#f4f4f4"/><path d="M32 22 L33 21 L41.5 21 L42.5 22.2 L41.5 23.3 L37.3 23.3 L37.3 26 L33 26 L33 23.3 L32.5 23 Z" fill="#1c1c1c"/></g>
<text x="219.4" y="597.0" font-size="15" font-weight="bold" fill="#f4f4f4" textLength="46.3" lengthAdjust="spacingAndGlyphs">Wood</text>
<text x="495.9" y="599.4" font-size="15" font-weight="bold" fill="#f4f4f4" textLength="40.2" lengthAdjust="spacingAndGlyphs">Scale</text>
<text x="815.5" y="600.0" font-size="20" font-weight="bold" fill="#f6f6f6" text-anchor="middle">30.27</text>
<text x="973.4" y="600.5" font-size="20.5" font-weight="normal" fill="#ececec" text-anchor="start" textLength="64.1" lengthAdjust="spacingAndGlyphs">kg/min</text>
<text x="219.4" y="647.0" font-size="15" font-weight="bold" fill="#f4f4f4" textLength="134.9" lengthAdjust="spacingAndGlyphs">Scale Throughput</text>
<text x="506.0" y="650.7" font-size="20" font-weight="bold" fill="#f6f6f6" text-anchor="middle">30.9</text>
<text x="564.5" y="646.5" font-size="17.5" font-weight="normal" fill="#ececec" text-anchor="start" textLength="54.3" lengthAdjust="spacingAndGlyphs">kg/min</text>
<text x="219.4" y="677.0" font-size="15" font-weight="bold" fill="#f4f4f4" textLength="128.3" lengthAdjust="spacingAndGlyphs">Throughput Atro</text>
<text x="506.0" y="680.7" font-size="20" font-weight="bold" fill="#f6f6f6" text-anchor="middle">30.3</text>
<text x="564.5" y="676.5" font-size="17.5" font-weight="normal" fill="#ececec" text-anchor="start" textLength="54.3" lengthAdjust="spacingAndGlyphs">kg/min</text>
<text x="644.5" y="677.0" font-size="15" font-weight="bold" fill="#f4f4f4" textLength="68.7" lengthAdjust="spacingAndGlyphs">Moisture</text>
<text x="931.0" y="680.7" font-size="20" font-weight="bold" fill="#f6f6f6" text-anchor="middle">2.0</text>
<text x="990.0" y="677.5" font-size="17.5" font-weight="normal" fill="#ececec" text-anchor="start" textLength="14.9" lengthAdjust="spacingAndGlyphs">%</text>
<text x="644.5" y="809.0" font-size="15" font-weight="bold" fill="#f4f4f4" textLength="82.8" lengthAdjust="spacingAndGlyphs">Weight OK</text>
<text x="644.5" y="839.0" font-size="15" font-weight="bold" fill="#f4f4f4" textLength="80.4" lengthAdjust="spacingAndGlyphs">Dosing OK</text>
<text x="644.5" y="869.0" font-size="15" font-weight="bold" fill="#f4f4f4" textLength="104.0" lengthAdjust="spacingAndGlyphs">External Start</text>
<text x="219.4" y="839.0" font-size="15" font-weight="bold" fill="#f4f4f4" textLength="62.0" lengthAdjust="spacingAndGlyphs">Enabled</text>
<text x="219.4" y="906.5" font-size="15" font-weight="bold" fill="#f4f4f4" textLength="102.9" lengthAdjust="spacingAndGlyphs">Actual Recipe</text>
<text x="469.4" y="906.5" font-size="15" font-weight="bold" fill="#f4f4f4" textLength="99.7" lengthAdjust="spacingAndGlyphs">Only refiner1</text>
<text x="938.9" y="904.0" font-size="16" font-weight="bold" fill="#f4f4f4" textLength="80.7" lengthAdjust="spacingAndGlyphs">More Data</text>
<text x="1086.2" y="193.8" font-size="18.5" font-weight="bold" fill="#f4f4f4" textLength="83.8" lengthAdjust="spacingAndGlyphs">MANUAL</text>
<text x="1086.2" y="233.8" font-size="18.5" font-weight="bold" fill="#f4f4f4" textLength="40.4" lengthAdjust="spacingAndGlyphs">IDLE</text>
<text x="1617.5" y="193.8" font-size="18" font-weight="bold" fill="#f2f2f2" text-anchor="middle" textLength="79.6" lengthAdjust="spacingAndGlyphs">Block L.2</text>
<text x="1382.0" y="270.0" font-size="18.5" font-weight="normal" fill="#ececec" text-anchor="middle" textLength="95.7" lengthAdjust="spacingAndGlyphs">Rev/min %</text>
<text x="1582.0" y="270.0" font-size="18.5" font-weight="normal" fill="#ececec" text-anchor="middle" textLength="46.2" lengthAdjust="spacingAndGlyphs">l/min</text>
<text x="1682.0" y="270.0" font-size="18.5" font-weight="normal" fill="#ececec" text-anchor="middle" textLength="64.7" lengthAdjust="spacingAndGlyphs">kg/min</text>
<text x="1782.0" y="270.0" font-size="18.5" font-weight="normal" fill="#ececec" text-anchor="middle" textLength="75.2" lengthAdjust="spacingAndGlyphs">kg\kg %</text>
<text x="1086.5" y="297.0" font-size="15" font-weight="bold" fill="#f4f4f4" textLength="32.3" lengthAdjust="spacingAndGlyphs">MDI</text>
<text x="1382.0" y="299.7" font-size="20" font-weight="bold" fill="#f6f6f6" text-anchor="middle" textLength="12.2" lengthAdjust="spacingAndGlyphs" >0</text>
<text x="1482.0" y="300.7" font-size="20" font-weight="bold" fill="#f6f6f6" text-anchor="middle" >-</text>
<text x="1582.0" y="299.7" font-size="20" font-weight="bold" fill="#f6f6f6" text-anchor="middle" textLength="41.8" lengthAdjust="spacingAndGlyphs" >0.00</text>
<text x="1682.0" y="299.7" font-size="20" font-weight="bold" fill="#f6f6f6" text-anchor="middle" textLength="41.8" lengthAdjust="spacingAndGlyphs" >0.00</text>
<text x="1782.0" y="299.7" font-size="20" font-weight="bold" fill="#f6f6f6" text-anchor="middle" textLength="41.8" lengthAdjust="spacingAndGlyphs" >0.00</text>
<g transform="translate(1835,278)"><line x1="3.04" y1="23.11" x2="7.98" y2="25.74" stroke="#d8443a" stroke-width="1.15"/><line x1="4.33" y1="20.86" x2="9.09" y2="23.80" stroke="#d8443a" stroke-width="1.15"/><line x1="5.77" y1="18.70" x2="10.33" y2="21.95" stroke="#d8443a" stroke-width="1.15"/><line x1="7.34" y1="16.63" x2="11.68" y2="20.18" stroke="#d8443a" stroke-width="1.15"/><line x1="9.05" y1="14.68" x2="13.15" y2="18.50" stroke="#d8443a" stroke-width="1.15"/><line x1="10.89" y1="12.84" x2="14.72" y2="16.92" stroke="#d8443a" stroke-width="1.15"/><line x1="12.84" y1="11.12" x2="16.39" y2="15.45" stroke="#d8443a" stroke-width="1.15"/><line x1="14.89" y1="9.54" x2="18.16" y2="14.09" stroke="#d8443a" stroke-width="1.15"/><line x1="17.05" y1="8.10" x2="20.01" y2="12.85" stroke="#d8443a" stroke-width="1.15"/><line x1="19.30" y1="6.79" x2="21.94" y2="11.73" stroke="#d8443a" stroke-width="1.15"/><line x1="21.63" y1="5.64" x2="23.94" y2="10.74" stroke="#d8443a" stroke-width="1.15"/><line x1="24.02" y1="4.65" x2="26.00" y2="9.89" stroke="#e9df5c" stroke-width="1.15"/><line x1="26.48" y1="3.81" x2="28.11" y2="9.17" stroke="#e9df5c" stroke-width="1.15"/><line x1="28.99" y1="3.14" x2="30.26" y2="8.59" stroke="#e9df5c" stroke-width="1.15"/><line x1="31.54" y1="2.63" x2="32.45" y2="8.16" stroke="#e9df5c" stroke-width="1.15"/><line x1="34.11" y1="2.29" x2="34.66" y2="7.86" stroke="#e9df5c" stroke-width="1.15"/><line x1="36.70" y1="2.12" x2="36.89" y2="7.72" stroke="#e9df5c" stroke-width="1.15"/><line x1="39.30" y1="2.12" x2="39.11" y2="7.72" stroke="#e9df5c" stroke-width="1.15"/><line x1="41.89" y1="2.29" x2="41.34" y2="7.86" stroke="#e9df5c" stroke-width="1.15"/><line x1="44.46" y1="2.63" x2="43.55" y2="8.16" stroke="#e9df5c" stroke-width="1.15"/><line x1="47.01" y1="3.14" x2="45.74" y2="8.59" stroke="#e9df5c" stroke-width="1.15"/><line x1="49.52" y1="3.81" x2="47.89" y2="9.17" stroke="#e9df5c" stroke-width="1.15"/><line x1="51.98" y1="4.65" x2="50.00" y2="9.89" stroke="#6cc44e" stroke-width="1.15"/><line x1="54.37" y1="5.64" x2="52.06" y2="10.74" stroke="#6cc44e" stroke-width="1.15"/><line x1="56.70" y1="6.79" x2="54.06" y2="11.73" stroke="#6cc44e" stroke-width="1.15"/><line x1="58.95" y1="8.10" x2="55.99" y2="12.85" stroke="#6cc44e" stroke-width="1.15"/><line x1="61.11" y1="9.54" x2="57.84" y2="14.09" stroke="#6cc44e" stroke-width="1.15"/><line x1="63.16" y1="11.12" x2="59.61" y2="15.45" stroke="#6cc44e" stroke-width="1.15"/><line x1="65.11" y1="12.84" x2="61.28" y2="16.92" stroke="#6cc44e" stroke-width="1.15"/><line x1="66.95" y1="14.68" x2="62.85" y2="18.50" stroke="#6cc44e" stroke-width="1.15"/><line x1="68.66" y1="16.63" x2="64.32" y2="20.18" stroke="#6cc44e" stroke-width="1.15"/><line x1="70.23" y1="18.70" x2="65.67" y2="21.95" stroke="#6cc44e" stroke-width="1.15"/><line x1="71.67" y1="20.86" x2="66.91" y2="23.80" stroke="#6cc44e" stroke-width="1.15"/><line x1="72.96" y1="23.11" x2="68.02" y2="25.74" stroke="#6cc44e" stroke-width="1.15"/><line x1="1" y1="26.4" x2="75" y2="26.4" stroke="#262626" stroke-width="1.3"/><path d="M38.5 24.5 L11.8 22.2 L11.6 24.2 L38.3 26.8 Z" fill="#f4f4f4"/><path d="M32.2 22 L33.2 21 L41.3 21 L42.3 22.2 L41.3 23.6 L41 23.6 L41 26 L38.2 26 L38.2 23.6 L33 23.6 Z" fill="#1c1c1c"/></g>
<text x="1086.5" y="327.0" font-size="15" font-weight="bold" fill="#f4f4f4" textLength="70.2" lengthAdjust="spacingAndGlyphs">Emulsion</text>
<text x="1382.0" y="329.7" font-size="20" font-weight="bold" fill="#f6f6f6" text-anchor="middle" textLength="12.2" lengthAdjust="spacingAndGlyphs" >0</text>
<text x="1482.0" y="330.7" font-size="20" font-weight="bold" fill="#f6f6f6" text-anchor="middle" >-</text>
<text x="1582.0" y="329.7" font-size="20" font-weight="bold" fill="#f6f6f6" text-anchor="middle" textLength="41.8" lengthAdjust="spacingAndGlyphs" >0.00</text>
<text x="1682.0" y="329.7" font-size="20" font-weight="bold" fill="#f6f6f6" text-anchor="middle" textLength="41.8" lengthAdjust="spacingAndGlyphs" >0.00</text>
<text x="1782.0" y="329.7" font-size="20" font-weight="bold" fill="#f6f6f6" text-anchor="middle" textLength="41.8" lengthAdjust="spacingAndGlyphs" >0.00</text>
<g transform="translate(1835,308)"><line x1="3.04" y1="23.11" x2="7.98" y2="25.74" stroke="#d8443a" stroke-width="1.15"/><line x1="4.33" y1="20.86" x2="9.09" y2="23.80" stroke="#d8443a" stroke-width="1.15"/><line x1="5.77" y1="18.70" x2="10.33" y2="21.95" stroke="#d8443a" stroke-width="1.15"/><line x1="7.34" y1="16.63" x2="11.68" y2="20.18" stroke="#d8443a" stroke-width="1.15"/><line x1="9.05" y1="14.68" x2="13.15" y2="18.50" stroke="#d8443a" stroke-width="1.15"/><line x1="10.89" y1="12.84" x2="14.72" y2="16.92" stroke="#d8443a" stroke-width="1.15"/><line x1="12.84" y1="11.12" x2="16.39" y2="15.45" stroke="#d8443a" stroke-width="1.15"/><line x1="14.89" y1="9.54" x2="18.16" y2="14.09" stroke="#d8443a" stroke-width="1.15"/><line x1="17.05" y1="8.10" x2="20.01" y2="12.85" stroke="#d8443a" stroke-width="1.15"/><line x1="19.30" y1="6.79" x2="21.94" y2="11.73" stroke="#d8443a" stroke-width="1.15"/><line x1="21.63" y1="5.64" x2="23.94" y2="10.74" stroke="#d8443a" stroke-width="1.15"/><line x1="24.02" y1="4.65" x2="26.00" y2="9.89" stroke="#e9df5c" stroke-width="1.15"/><line x1="26.48" y1="3.81" x2="28.11" y2="9.17" stroke="#e9df5c" stroke-width="1.15"/><line x1="28.99" y1="3.14" x2="30.26" y2="8.59" stroke="#e9df5c" stroke-width="1.15"/><line x1="31.54" y1="2.63" x2="32.45" y2="8.16" stroke="#e9df5c" stroke-width="1.15"/><line x1="34.11" y1="2.29" x2="34.66" y2="7.86" stroke="#e9df5c" stroke-width="1.15"/><line x1="36.70" y1="2.12" x2="36.89" y2="7.72" stroke="#e9df5c" stroke-width="1.15"/><line x1="39.30" y1="2.12" x2="39.11" y2="7.72" stroke="#e9df5c" stroke-width="1.15"/><line x1="41.89" y1="2.29" x2="41.34" y2="7.86" stroke="#e9df5c" stroke-width="1.15"/><line x1="44.46" y1="2.63" x2="43.55" y2="8.16" stroke="#e9df5c" stroke-width="1.15"/><line x1="47.01" y1="3.14" x2="45.74" y2="8.59" stroke="#e9df5c" stroke-width="1.15"/><line x1="49.52" y1="3.81" x2="47.89" y2="9.17" stroke="#e9df5c" stroke-width="1.15"/><line x1="51.98" y1="4.65" x2="50.00" y2="9.89" stroke="#6cc44e" stroke-width="1.15"/><line x1="54.37" y1="5.64" x2="52.06" y2="10.74" stroke="#6cc44e" stroke-width="1.15"/><line x1="56.70" y1="6.79" x2="54.06" y2="11.73" stroke="#6cc44e" stroke-width="1.15"/><line x1="58.95" y1="8.10" x2="55.99" y2="12.85" stroke="#6cc44e" stroke-width="1.15"/><line x1="61.11" y1="9.54" x2="57.84" y2="14.09" stroke="#6cc44e" stroke-width="1.15"/><line x1="63.16" y1="11.12" x2="59.61" y2="15.45" stroke="#6cc44e" stroke-width="1.15"/><line x1="65.11" y1="12.84" x2="61.28" y2="16.92" stroke="#6cc44e" stroke-width="1.15"/><line x1="66.95" y1="14.68" x2="62.85" y2="18.50" stroke="#6cc44e" stroke-width="1.15"/><line x1="68.66" y1="16.63" x2="64.32" y2="20.18" stroke="#6cc44e" stroke-width="1.15"/><line x1="70.23" y1="18.70" x2="65.67" y2="21.95" stroke="#6cc44e" stroke-width="1.15"/><line x1="71.67" y1="20.86" x2="66.91" y2="23.80" stroke="#6cc44e" stroke-width="1.15"/><line x1="72.96" y1="23.11" x2="68.02" y2="25.74" stroke="#6cc44e" stroke-width="1.15"/><line x1="1" y1="26.4" x2="75" y2="26.4" stroke="#262626" stroke-width="1.3"/><path d="M38.5 24.5 L11.8 22.2 L11.6 24.2 L38.3 26.8 Z" fill="#f4f4f4"/><path d="M32.2 22 L33.2 21 L41.3 21 L42.3 22.2 L41.3 23.6 L41 23.6 L41 26 L38.2 26 L38.2 23.6 L33 23.6 Z" fill="#1c1c1c"/></g>
<text x="1086.5" y="357.0" font-size="15" font-weight="bold" fill="#f4f4f4" textLength="45.9" lengthAdjust="spacingAndGlyphs">Water</text>
<text x="1382.0" y="359.7" font-size="20" font-weight="bold" fill="#f6f6f6" text-anchor="middle" textLength="12.2" lengthAdjust="spacingAndGlyphs" >0</text>
<text x="1482.0" y="360.7" font-size="20" font-weight="bold" fill="#f6f6f6" text-anchor="middle" >-</text>
<text x="1582.0" y="359.7" font-size="20" font-weight="bold" fill="#f6f6f6" text-anchor="middle" textLength="41.8" lengthAdjust="spacingAndGlyphs" >0.00</text>
<text x="1682.0" y="359.7" font-size="20" font-weight="bold" fill="#f6f6f6" text-anchor="middle" textLength="41.8" lengthAdjust="spacingAndGlyphs" >0.00</text>
<text x="1782.0" y="359.7" font-size="20" font-weight="bold" fill="#f6f6f6" text-anchor="middle" textLength="41.8" lengthAdjust="spacingAndGlyphs" >0.00</text>
<g transform="translate(1835,338)"><line x1="3.04" y1="23.11" x2="7.98" y2="25.74" stroke="#d8443a" stroke-width="1.15"/><line x1="4.33" y1="20.86" x2="9.09" y2="23.80" stroke="#d8443a" stroke-width="1.15"/><line x1="5.77" y1="18.70" x2="10.33" y2="21.95" stroke="#d8443a" stroke-width="1.15"/><line x1="7.34" y1="16.63" x2="11.68" y2="20.18" stroke="#d8443a" stroke-width="1.15"/><line x1="9.05" y1="14.68" x2="13.15" y2="18.50" stroke="#d8443a" stroke-width="1.15"/><line x1="10.89" y1="12.84" x2="14.72" y2="16.92" stroke="#d8443a" stroke-width="1.15"/><line x1="12.84" y1="11.12" x2="16.39" y2="15.45" stroke="#d8443a" stroke-width="1.15"/><line x1="14.89" y1="9.54" x2="18.16" y2="14.09" stroke="#d8443a" stroke-width="1.15"/><line x1="17.05" y1="8.10" x2="20.01" y2="12.85" stroke="#d8443a" stroke-width="1.15"/><line x1="19.30" y1="6.79" x2="21.94" y2="11.73" stroke="#d8443a" stroke-width="1.15"/><line x1="21.63" y1="5.64" x2="23.94" y2="10.74" stroke="#d8443a" stroke-width="1.15"/><line x1="24.02" y1="4.65" x2="26.00" y2="9.89" stroke="#e9df5c" stroke-width="1.15"/><line x1="26.48" y1="3.81" x2="28.11" y2="9.17" stroke="#e9df5c" stroke-width="1.15"/><line x1="28.99" y1="3.14" x2="30.26" y2="8.59" stroke="#e9df5c" stroke-width="1.15"/><line x1="31.54" y1="2.63" x2="32.45" y2="8.16" stroke="#e9df5c" stroke-width="1.15"/><line x1="34.11" y1="2.29" x2="34.66" y2="7.86" stroke="#e9df5c" stroke-width="1.15"/><line x1="36.70" y1="2.12" x2="36.89" y2="7.72" stroke="#e9df5c" stroke-width="1.15"/><line x1="39.30" y1="2.12" x2="39.11" y2="7.72" stroke="#e9df5c" stroke-width="1.15"/><line x1="41.89" y1="2.29" x2="41.34" y2="7.86" stroke="#e9df5c" stroke-width="1.15"/><line x1="44.46" y1="2.63" x2="43.55" y2="8.16" stroke="#e9df5c" stroke-width="1.15"/><line x1="47.01" y1="3.14" x2="45.74" y2="8.59" stroke="#e9df5c" stroke-width="1.15"/><line x1="49.52" y1="3.81" x2="47.89" y2="9.17" stroke="#e9df5c" stroke-width="1.15"/><line x1="51.98" y1="4.65" x2="50.00" y2="9.89" stroke="#6cc44e" stroke-width="1.15"/><line x1="54.37" y1="5.64" x2="52.06" y2="10.74" stroke="#6cc44e" stroke-width="1.15"/><line x1="56.70" y1="6.79" x2="54.06" y2="11.73" stroke="#6cc44e" stroke-width="1.15"/><line x1="58.95" y1="8.10" x2="55.99" y2="12.85" stroke="#6cc44e" stroke-width="1.15"/><line x1="61.11" y1="9.54" x2="57.84" y2="14.09" stroke="#6cc44e" stroke-width="1.15"/><line x1="63.16" y1="11.12" x2="59.61" y2="15.45" stroke="#6cc44e" stroke-width="1.15"/><line x1="65.11" y1="12.84" x2="61.28" y2="16.92" stroke="#6cc44e" stroke-width="1.15"/><line x1="66.95" y1="14.68" x2="62.85" y2="18.50" stroke="#6cc44e" stroke-width="1.15"/><line x1="68.66" y1="16.63" x2="64.32" y2="20.18" stroke="#6cc44e" stroke-width="1.15"/><line x1="70.23" y1="18.70" x2="65.67" y2="21.95" stroke="#6cc44e" stroke-width="1.15"/><line x1="71.67" y1="20.86" x2="66.91" y2="23.80" stroke="#6cc44e" stroke-width="1.15"/><line x1="72.96" y1="23.11" x2="68.02" y2="25.74" stroke="#6cc44e" stroke-width="1.15"/><line x1="1" y1="26.4" x2="75" y2="26.4" stroke="#262626" stroke-width="1.3"/><path d="M38.5 24.5 L11.8 22.2 L11.6 24.2 L38.3 26.8 Z" fill="#f4f4f4"/><path d="M32.2 22 L33.2 21 L41.3 21 L42.3 22.2 L41.3 23.6 L41 23.6 L41 26 L38.2 26 L38.2 23.6 L33 23.6 Z" fill="#1c1c1c"/></g>
<text x="1086.5" y="387.0" font-size="15" font-weight="bold" fill="#f4f4f4" textLength="108.9" lengthAdjust="spacingAndGlyphs">Release Agent</text>
<text x="1382.0" y="389.7" font-size="20" font-weight="bold" fill="#f6f6f6" text-anchor="middle" textLength="12.2" lengthAdjust="spacingAndGlyphs" >0</text>
<text x="1482.0" y="390.7" font-size="20" font-weight="bold" fill="#f6f6f6" text-anchor="middle" >-</text>
<text x="1582.0" y="389.7" font-size="20" font-weight="bold" fill="#f6f6f6" text-anchor="middle" textLength="41.8" lengthAdjust="spacingAndGlyphs" >0.00</text>
<text x="1682.0" y="389.7" font-size="20" font-weight="bold" fill="#f6f6f6" text-anchor="middle" textLength="41.8" lengthAdjust="spacingAndGlyphs" >0.00</text>
<text x="1782.0" y="389.7" font-size="20" font-weight="bold" fill="#f6f6f6" text-anchor="middle" textLength="41.8" lengthAdjust="spacingAndGlyphs" >0.00</text>
<g transform="translate(1835,368)"><line x1="3.04" y1="23.11" x2="7.98" y2="25.74" stroke="#d8443a" stroke-width="1.15"/><line x1="4.33" y1="20.86" x2="9.09" y2="23.80" stroke="#d8443a" stroke-width="1.15"/><line x1="5.77" y1="18.70" x2="10.33" y2="21.95" stroke="#d8443a" stroke-width="1.15"/><line x1="7.34" y1="16.63" x2="11.68" y2="20.18" stroke="#d8443a" stroke-width="1.15"/><line x1="9.05" y1="14.68" x2="13.15" y2="18.50" stroke="#d8443a" stroke-width="1.15"/><line x1="10.89" y1="12.84" x2="14.72" y2="16.92" stroke="#d8443a" stroke-width="1.15"/><line x1="12.84" y1="11.12" x2="16.39" y2="15.45" stroke="#d8443a" stroke-width="1.15"/><line x1="14.89" y1="9.54" x2="18.16" y2="14.09" stroke="#d8443a" stroke-width="1.15"/><line x1="17.05" y1="8.10" x2="20.01" y2="12.85" stroke="#d8443a" stroke-width="1.15"/><line x1="19.30" y1="6.79" x2="21.94" y2="11.73" stroke="#d8443a" stroke-width="1.15"/><line x1="21.63" y1="5.64" x2="23.94" y2="10.74" stroke="#d8443a" stroke-width="1.15"/><line x1="24.02" y1="4.65" x2="26.00" y2="9.89" stroke="#e9df5c" stroke-width="1.15"/><line x1="26.48" y1="3.81" x2="28.11" y2="9.17" stroke="#e9df5c" stroke-width="1.15"/><line x1="28.99" y1="3.14" x2="30.26" y2="8.59" stroke="#e9df5c" stroke-width="1.15"/><line x1="31.54" y1="2.63" x2="32.45" y2="8.16" stroke="#e9df5c" stroke-width="1.15"/><line x1="34.11" y1="2.29" x2="34.66" y2="7.86" stroke="#e9df5c" stroke-width="1.15"/><line x1="36.70" y1="2.12" x2="36.89" y2="7.72" stroke="#e9df5c" stroke-width="1.15"/><line x1="39.30" y1="2.12" x2="39.11" y2="7.72" stroke="#e9df5c" stroke-width="1.15"/><line x1="41.89" y1="2.29" x2="41.34" y2="7.86" stroke="#e9df5c" stroke-width="1.15"/><line x1="44.46" y1="2.63" x2="43.55" y2="8.16" stroke="#e9df5c" stroke-width="1.15"/><line x1="47.01" y1="3.14" x2="45.74" y2="8.59" stroke="#e9df5c" stroke-width="1.15"/><line x1="49.52" y1="3.81" x2="47.89" y2="9.17" stroke="#e9df5c" stroke-width="1.15"/><line x1="51.98" y1="4.65" x2="50.00" y2="9.89" stroke="#6cc44e" stroke-width="1.15"/><line x1="54.37" y1="5.64" x2="52.06" y2="10.74" stroke="#6cc44e" stroke-width="1.15"/><line x1="56.70" y1="6.79" x2="54.06" y2="11.73" stroke="#6cc44e" stroke-width="1.15"/><line x1="58.95" y1="8.10" x2="55.99" y2="12.85" stroke="#6cc44e" stroke-width="1.15"/><line x1="61.11" y1="9.54" x2="57.84" y2="14.09" stroke="#6cc44e" stroke-width="1.15"/><line x1="63.16" y1="11.12" x2="59.61" y2="15.45" stroke="#6cc44e" stroke-width="1.15"/><line x1="65.11" y1="12.84" x2="61.28" y2="16.92" stroke="#6cc44e" stroke-width="1.15"/><line x1="66.95" y1="14.68" x2="62.85" y2="18.50" stroke="#6cc44e" stroke-width="1.15"/><line x1="68.66" y1="16.63" x2="64.32" y2="20.18" stroke="#6cc44e" stroke-width="1.15"/><line x1="70.23" y1="18.70" x2="65.67" y2="21.95" stroke="#6cc44e" stroke-width="1.15"/><line x1="71.67" y1="20.86" x2="66.91" y2="23.80" stroke="#6cc44e" stroke-width="1.15"/><line x1="72.96" y1="23.11" x2="68.02" y2="25.74" stroke="#6cc44e" stroke-width="1.15"/><line x1="1" y1="26.4" x2="75" y2="26.4" stroke="#262626" stroke-width="1.3"/><path d="M38.5 24.5 L11.8 22.2 L11.6 24.2 L38.3 26.8 Z" fill="#f4f4f4"/><path d="M32.2 22 L33.2 21 L41.3 21 L42.3 22.2 L41.3 23.6 L41 23.6 L41 26 L38.2 26 L38.2 23.6 L33 23.6 Z" fill="#1c1c1c"/></g>
<text x="1086.5" y="417.0" font-size="15" font-weight="bold" fill="#f4f4f4" textLength="36.2" lengthAdjust="spacingAndGlyphs">Urea</text>
<text x="1382.0" y="419.7" font-size="20" font-weight="bold" fill="#f6f6f6" text-anchor="middle" textLength="12.2" lengthAdjust="spacingAndGlyphs" >0</text>
<text x="1482.0" y="420.7" font-size="20" font-weight="bold" fill="#f6f6f6" text-anchor="middle" >-</text>
<text x="1582.0" y="419.7" font-size="20" font-weight="bold" fill="#f6f6f6" text-anchor="middle" textLength="41.8" lengthAdjust="spacingAndGlyphs" >0.00</text>
<text x="1682.0" y="419.7" font-size="20" font-weight="bold" fill="#f6f6f6" text-anchor="middle" textLength="41.8" lengthAdjust="spacingAndGlyphs" >0.00</text>
<text x="1782.0" y="419.7" font-size="20" font-weight="bold" fill="#f6f6f6" text-anchor="middle" textLength="41.8" lengthAdjust="spacingAndGlyphs" >0.00</text>
<g transform="translate(1835,398)"><line x1="3.04" y1="23.11" x2="7.98" y2="25.74" stroke="#d8443a" stroke-width="1.15"/><line x1="4.33" y1="20.86" x2="9.09" y2="23.80" stroke="#d8443a" stroke-width="1.15"/><line x1="5.77" y1="18.70" x2="10.33" y2="21.95" stroke="#d8443a" stroke-width="1.15"/><line x1="7.34" y1="16.63" x2="11.68" y2="20.18" stroke="#d8443a" stroke-width="1.15"/><line x1="9.05" y1="14.68" x2="13.15" y2="18.50" stroke="#d8443a" stroke-width="1.15"/><line x1="10.89" y1="12.84" x2="14.72" y2="16.92" stroke="#d8443a" stroke-width="1.15"/><line x1="12.84" y1="11.12" x2="16.39" y2="15.45" stroke="#d8443a" stroke-width="1.15"/><line x1="14.89" y1="9.54" x2="18.16" y2="14.09" stroke="#d8443a" stroke-width="1.15"/><line x1="17.05" y1="8.10" x2="20.01" y2="12.85" stroke="#d8443a" stroke-width="1.15"/><line x1="19.30" y1="6.79" x2="21.94" y2="11.73" stroke="#d8443a" stroke-width="1.15"/><line x1="21.63" y1="5.64" x2="23.94" y2="10.74" stroke="#d8443a" stroke-width="1.15"/><line x1="24.02" y1="4.65" x2="26.00" y2="9.89" stroke="#e9df5c" stroke-width="1.15"/><line x1="26.48" y1="3.81" x2="28.11" y2="9.17" stroke="#e9df5c" stroke-width="1.15"/><line x1="28.99" y1="3.14" x2="30.26" y2="8.59" stroke="#e9df5c" stroke-width="1.15"/><line x1="31.54" y1="2.63" x2="32.45" y2="8.16" stroke="#e9df5c" stroke-width="1.15"/><line x1="34.11" y1="2.29" x2="34.66" y2="7.86" stroke="#e9df5c" stroke-width="1.15"/><line x1="36.70" y1="2.12" x2="36.89" y2="7.72" stroke="#e9df5c" stroke-width="1.15"/><line x1="39.30" y1="2.12" x2="39.11" y2="7.72" stroke="#e9df5c" stroke-width="1.15"/><line x1="41.89" y1="2.29" x2="41.34" y2="7.86" stroke="#e9df5c" stroke-width="1.15"/><line x1="44.46" y1="2.63" x2="43.55" y2="8.16" stroke="#e9df5c" stroke-width="1.15"/><line x1="47.01" y1="3.14" x2="45.74" y2="8.59" stroke="#e9df5c" stroke-width="1.15"/><line x1="49.52" y1="3.81" x2="47.89" y2="9.17" stroke="#e9df5c" stroke-width="1.15"/><line x1="51.98" y1="4.65" x2="50.00" y2="9.89" stroke="#6cc44e" stroke-width="1.15"/><line x1="54.37" y1="5.64" x2="52.06" y2="10.74" stroke="#6cc44e" stroke-width="1.15"/><line x1="56.70" y1="6.79" x2="54.06" y2="11.73" stroke="#6cc44e" stroke-width="1.15"/><line x1="58.95" y1="8.10" x2="55.99" y2="12.85" stroke="#6cc44e" stroke-width="1.15"/><line x1="61.11" y1="9.54" x2="57.84" y2="14.09" stroke="#6cc44e" stroke-width="1.15"/><line x1="63.16" y1="11.12" x2="59.61" y2="15.45" stroke="#6cc44e" stroke-width="1.15"/><line x1="65.11" y1="12.84" x2="61.28" y2="16.92" stroke="#6cc44e" stroke-width="1.15"/><line x1="66.95" y1="14.68" x2="62.85" y2="18.50" stroke="#6cc44e" stroke-width="1.15"/><line x1="68.66" y1="16.63" x2="64.32" y2="20.18" stroke="#6cc44e" stroke-width="1.15"/><line x1="70.23" y1="18.70" x2="65.67" y2="21.95" stroke="#6cc44e" stroke-width="1.15"/><line x1="71.67" y1="20.86" x2="66.91" y2="23.80" stroke="#6cc44e" stroke-width="1.15"/><line x1="72.96" y1="23.11" x2="68.02" y2="25.74" stroke="#6cc44e" stroke-width="1.15"/><line x1="1" y1="26.4" x2="75" y2="26.4" stroke="#262626" stroke-width="1.3"/><path d="M38.5 24.5 L11.8 22.2 L11.6 24.2 L38.3 26.8 Z" fill="#f4f4f4"/><path d="M32.2 22 L33.2 21 L41.3 21 L42.3 22.2 L41.3 23.6 L41 23.6 L41 26 L38.2 26 L38.2 23.6 L33 23.6 Z" fill="#1c1c1c"/></g>
<text x="1086.5" y="447.0" font-size="15" font-weight="bold" fill="#f4f4f4" textLength="71.2" lengthAdjust="spacingAndGlyphs">Hardener</text>
<text x="1382.0" y="449.7" font-size="20" font-weight="bold" fill="#f6f6f6" text-anchor="middle" textLength="12.2" lengthAdjust="spacingAndGlyphs" >0</text>
<text x="1482.0" y="450.7" font-size="20" font-weight="bold" fill="#f6f6f6" text-anchor="middle" >-</text>
<text x="1582.0" y="449.7" font-size="20" font-weight="bold" fill="#f6f6f6" text-anchor="middle" textLength="41.8" lengthAdjust="spacingAndGlyphs" >0.00</text>
<text x="1682.0" y="449.7" font-size="20" font-weight="bold" fill="#f6f6f6" text-anchor="middle" textLength="41.8" lengthAdjust="spacingAndGlyphs" >0.00</text>
<text x="1782.0" y="449.7" font-size="20" font-weight="bold" fill="#f6f6f6" text-anchor="middle" textLength="41.8" lengthAdjust="spacingAndGlyphs" >0.00</text>
<g transform="translate(1835,428)"><line x1="3.04" y1="23.11" x2="7.98" y2="25.74" stroke="#d8443a" stroke-width="1.15"/><line x1="4.33" y1="20.86" x2="9.09" y2="23.80" stroke="#d8443a" stroke-width="1.15"/><line x1="5.77" y1="18.70" x2="10.33" y2="21.95" stroke="#d8443a" stroke-width="1.15"/><line x1="7.34" y1="16.63" x2="11.68" y2="20.18" stroke="#d8443a" stroke-width="1.15"/><line x1="9.05" y1="14.68" x2="13.15" y2="18.50" stroke="#d8443a" stroke-width="1.15"/><line x1="10.89" y1="12.84" x2="14.72" y2="16.92" stroke="#d8443a" stroke-width="1.15"/><line x1="12.84" y1="11.12" x2="16.39" y2="15.45" stroke="#d8443a" stroke-width="1.15"/><line x1="14.89" y1="9.54" x2="18.16" y2="14.09" stroke="#d8443a" stroke-width="1.15"/><line x1="17.05" y1="8.10" x2="20.01" y2="12.85" stroke="#d8443a" stroke-width="1.15"/><line x1="19.30" y1="6.79" x2="21.94" y2="11.73" stroke="#d8443a" stroke-width="1.15"/><line x1="21.63" y1="5.64" x2="23.94" y2="10.74" stroke="#d8443a" stroke-width="1.15"/><line x1="24.02" y1="4.65" x2="26.00" y2="9.89" stroke="#e9df5c" stroke-width="1.15"/><line x1="26.48" y1="3.81" x2="28.11" y2="9.17" stroke="#e9df5c" stroke-width="1.15"/><line x1="28.99" y1="3.14" x2="30.26" y2="8.59" stroke="#e9df5c" stroke-width="1.15"/><line x1="31.54" y1="2.63" x2="32.45" y2="8.16" stroke="#e9df5c" stroke-width="1.15"/><line x1="34.11" y1="2.29" x2="34.66" y2="7.86" stroke="#e9df5c" stroke-width="1.15"/><line x1="36.70" y1="2.12" x2="36.89" y2="7.72" stroke="#e9df5c" stroke-width="1.15"/><line x1="39.30" y1="2.12" x2="39.11" y2="7.72" stroke="#e9df5c" stroke-width="1.15"/><line x1="41.89" y1="2.29" x2="41.34" y2="7.86" stroke="#e9df5c" stroke-width="1.15"/><line x1="44.46" y1="2.63" x2="43.55" y2="8.16" stroke="#e9df5c" stroke-width="1.15"/><line x1="47.01" y1="3.14" x2="45.74" y2="8.59" stroke="#e9df5c" stroke-width="1.15"/><line x1="49.52" y1="3.81" x2="47.89" y2="9.17" stroke="#e9df5c" stroke-width="1.15"/><line x1="51.98" y1="4.65" x2="50.00" y2="9.89" stroke="#6cc44e" stroke-width="1.15"/><line x1="54.37" y1="5.64" x2="52.06" y2="10.74" stroke="#6cc44e" stroke-width="1.15"/><line x1="56.70" y1="6.79" x2="54.06" y2="11.73" stroke="#6cc44e" stroke-width="1.15"/><line x1="58.95" y1="8.10" x2="55.99" y2="12.85" stroke="#6cc44e" stroke-width="1.15"/><line x1="61.11" y1="9.54" x2="57.84" y2="14.09" stroke="#6cc44e" stroke-width="1.15"/><line x1="63.16" y1="11.12" x2="59.61" y2="15.45" stroke="#6cc44e" stroke-width="1.15"/><line x1="65.11" y1="12.84" x2="61.28" y2="16.92" stroke="#6cc44e" stroke-width="1.15"/><line x1="66.95" y1="14.68" x2="62.85" y2="18.50" stroke="#6cc44e" stroke-width="1.15"/><line x1="68.66" y1="16.63" x2="64.32" y2="20.18" stroke="#6cc44e" stroke-width="1.15"/><line x1="70.23" y1="18.70" x2="65.67" y2="21.95" stroke="#6cc44e" stroke-width="1.15"/><line x1="71.67" y1="20.86" x2="66.91" y2="23.80" stroke="#6cc44e" stroke-width="1.15"/><line x1="72.96" y1="23.11" x2="68.02" y2="25.74" stroke="#6cc44e" stroke-width="1.15"/><line x1="1" y1="26.4" x2="75" y2="26.4" stroke="#262626" stroke-width="1.3"/><path d="M38.5 24.5 L11.8 22.2 L11.6 24.2 L38.3 26.8 Z" fill="#f4f4f4"/><path d="M32.2 22 L33.2 21 L41.3 21 L42.3 22.2 L41.3 23.6 L41 23.6 L41 26 L38.2 26 L38.2 23.6 L33 23.6 Z" fill="#1c1c1c"/></g>
<text x="1086.5" y="477.0" font-size="15" font-weight="bold" fill="#f4f4f4" textLength="30.3" lengthAdjust="spacingAndGlyphs">Dye</text>
<text x="1382.0" y="479.7" font-size="20" font-weight="bold" fill="#f6f6f6" text-anchor="middle" textLength="12.2" lengthAdjust="spacingAndGlyphs" >0</text>
<text x="1482.0" y="480.7" font-size="20" font-weight="bold" fill="#f6f6f6" text-anchor="middle" >-</text>
<text x="1582.0" y="479.7" font-size="20" font-weight="bold" fill="#f6f6f6" text-anchor="middle" textLength="41.8" lengthAdjust="spacingAndGlyphs" >0.00</text>
<text x="1682.0" y="479.7" font-size="20" font-weight="bold" fill="#f6f6f6" text-anchor="middle" textLength="41.8" lengthAdjust="spacingAndGlyphs" >0.00</text>
<text x="1782.0" y="479.7" font-size="20" font-weight="bold" fill="#f6f6f6" text-anchor="middle" textLength="41.8" lengthAdjust="spacingAndGlyphs" >0.00</text>
<g transform="translate(1835,458)"><line x1="3.04" y1="23.11" x2="7.98" y2="25.74" stroke="#d8443a" stroke-width="1.15"/><line x1="4.33" y1="20.86" x2="9.09" y2="23.80" stroke="#d8443a" stroke-width="1.15"/><line x1="5.77" y1="18.70" x2="10.33" y2="21.95" stroke="#d8443a" stroke-width="1.15"/><line x1="7.34" y1="16.63" x2="11.68" y2="20.18" stroke="#d8443a" stroke-width="1.15"/><line x1="9.05" y1="14.68" x2="13.15" y2="18.50" stroke="#d8443a" stroke-width="1.15"/><line x1="10.89" y1="12.84" x2="14.72" y2="16.92" stroke="#d8443a" stroke-width="1.15"/><line x1="12.84" y1="11.12" x2="16.39" y2="15.45" stroke="#d8443a" stroke-width="1.15"/><line x1="14.89" y1="9.54" x2="18.16" y2="14.09" stroke="#d8443a" stroke-width="1.15"/><line x1="17.05" y1="8.10" x2="20.01" y2="12.85" stroke="#d8443a" stroke-width="1.15"/><line x1="19.30" y1="6.79" x2="21.94" y2="11.73" stroke="#d8443a" stroke-width="1.15"/><line x1="21.63" y1="5.64" x2="23.94" y2="10.74" stroke="#d8443a" stroke-width="1.15"/><line x1="24.02" y1="4.65" x2="26.00" y2="9.89" stroke="#e9df5c" stroke-width="1.15"/><line x1="26.48" y1="3.81" x2="28.11" y2="9.17" stroke="#e9df5c" stroke-width="1.15"/><line x1="28.99" y1="3.14" x2="30.26" y2="8.59" stroke="#e9df5c" stroke-width="1.15"/><line x1="31.54" y1="2.63" x2="32.45" y2="8.16" stroke="#e9df5c" stroke-width="1.15"/><line x1="34.11" y1="2.29" x2="34.66" y2="7.86" stroke="#e9df5c" stroke-width="1.15"/><line x1="36.70" y1="2.12" x2="36.89" y2="7.72" stroke="#e9df5c" stroke-width="1.15"/><line x1="39.30" y1="2.12" x2="39.11" y2="7.72" stroke="#e9df5c" stroke-width="1.15"/><line x1="41.89" y1="2.29" x2="41.34" y2="7.86" stroke="#e9df5c" stroke-width="1.15"/><line x1="44.46" y1="2.63" x2="43.55" y2="8.16" stroke="#e9df5c" stroke-width="1.15"/><line x1="47.01" y1="3.14" x2="45.74" y2="8.59" stroke="#e9df5c" stroke-width="1.15"/><line x1="49.52" y1="3.81" x2="47.89" y2="9.17" stroke="#e9df5c" stroke-width="1.15"/><line x1="51.98" y1="4.65" x2="50.00" y2="9.89" stroke="#6cc44e" stroke-width="1.15"/><line x1="54.37" y1="5.64" x2="52.06" y2="10.74" stroke="#6cc44e" stroke-width="1.15"/><line x1="56.70" y1="6.79" x2="54.06" y2="11.73" stroke="#6cc44e" stroke-width="1.15"/><line x1="58.95" y1="8.10" x2="55.99" y2="12.85" stroke="#6cc44e" stroke-width="1.15"/><line x1="61.11" y1="9.54" x2="57.84" y2="14.09" stroke="#6cc44e" stroke-width="1.15"/><line x1="63.16" y1="11.12" x2="59.61" y2="15.45" stroke="#6cc44e" stroke-width="1.15"/><line x1="65.11" y1="12.84" x2="61.28" y2="16.92" stroke="#6cc44e" stroke-width="1.15"/><line x1="66.95" y1="14.68" x2="62.85" y2="18.50" stroke="#6cc44e" stroke-width="1.15"/><line x1="68.66" y1="16.63" x2="64.32" y2="20.18" stroke="#6cc44e" stroke-width="1.15"/><line x1="70.23" y1="18.70" x2="65.67" y2="21.95" stroke="#6cc44e" stroke-width="1.15"/><line x1="71.67" y1="20.86" x2="66.91" y2="23.80" stroke="#6cc44e" stroke-width="1.15"/><line x1="72.96" y1="23.11" x2="68.02" y2="25.74" stroke="#6cc44e" stroke-width="1.15"/><line x1="1" y1="26.4" x2="75" y2="26.4" stroke="#262626" stroke-width="1.3"/><path d="M38.5 24.5 L11.8 22.2 L11.6 24.2 L38.3 26.8 Z" fill="#f4f4f4"/><path d="M32.2 22 L33.2 21 L41.3 21 L42.3 22.2 L41.3 23.6 L41 23.6 L41 26 L38.2 26 L38.2 23.6 L33 23.6 Z" fill="#1c1c1c"/></g>
<text x="1086.5" y="597.0" font-size="15" font-weight="bold" fill="#f4f4f4" textLength="46.3" lengthAdjust="spacingAndGlyphs">Wood</text>
<text x="1363.0" y="599.4" font-size="15" font-weight="bold" fill="#f4f4f4" textLength="40.2" lengthAdjust="spacingAndGlyphs">Scale</text>
<text x="1682.5" y="600.0" font-size="20" font-weight="bold" fill="#f6f6f6" text-anchor="middle">0.02</text>
<text x="1840.4" y="600.5" font-size="20.5" font-weight="normal" fill="#ececec" text-anchor="start" textLength="64.1" lengthAdjust="spacingAndGlyphs">kg/min</text>
<text x="1086.5" y="647.0" font-size="15" font-weight="bold" fill="#f4f4f4" textLength="134.9" lengthAdjust="spacingAndGlyphs">Scale Throughput</text>
<text x="1373.0" y="650.7" font-size="20" font-weight="bold" fill="#f6f6f6" text-anchor="middle" textLength="29.8" lengthAdjust="spacingAndGlyphs" >0.0</text>
<text x="1431.5" y="646.5" font-size="17.5" font-weight="normal" fill="#ececec" text-anchor="start" textLength="54.3" lengthAdjust="spacingAndGlyphs">kg/min</text>
<text x="1086.5" y="677.0" font-size="15" font-weight="bold" fill="#f4f4f4" textLength="128.3" lengthAdjust="spacingAndGlyphs">Throughput Atro</text>
<text x="1373.0" y="680.7" font-size="20" font-weight="bold" fill="#f6f6f6" text-anchor="middle" textLength="29.8" lengthAdjust="spacingAndGlyphs" >0.0</text>
<text x="1431.5" y="676.5" font-size="17.5" font-weight="normal" fill="#ececec" text-anchor="start" textLength="54.3" lengthAdjust="spacingAndGlyphs">kg/min</text>
<text x="1511.5" y="677.0" font-size="15" font-weight="bold" fill="#f4f4f4" textLength="68.7" lengthAdjust="spacingAndGlyphs">Moisture</text>
<text x="1798.0" y="680.7" font-size="20" font-weight="bold" fill="#f6f6f6" text-anchor="middle" textLength="29.8" lengthAdjust="spacingAndGlyphs" >0.0</text>
<text x="1857.0" y="677.5" font-size="17.5" font-weight="normal" fill="#ececec" text-anchor="start" textLength="14.9" lengthAdjust="spacingAndGlyphs">%</text>
<text x="1511.5" y="807.0" font-size="15" font-weight="bold" fill="#f4f4f4" textLength="112.5" lengthAdjust="spacingAndGlyphs">Weight not OK</text>
<text x="1511.5" y="837.0" font-size="15" font-weight="bold" fill="#f4f4f4" textLength="80.4" lengthAdjust="spacingAndGlyphs">Dosing OK</text>
<text x="1511.5" y="867.0" font-size="15" font-weight="bold" fill="#f4f4f4" textLength="102.5" lengthAdjust="spacingAndGlyphs">External Stop</text>
<text x="1086.5" y="837.0" font-size="15" font-weight="bold" fill="#f4f4f4" textLength="66.8" lengthAdjust="spacingAndGlyphs">Disabled</text>
<text x="1086.5" y="906.5" font-size="15" font-weight="bold" fill="#f4f4f4" textLength="102.9" lengthAdjust="spacingAndGlyphs">Actual Recipe</text>
<text x="1336.5" y="906.5" font-size="15" font-weight="bold" fill="#f4f4f4" textLength="108.0" lengthAdjust="spacingAndGlyphs">Only Blender1</text>
<text x="1805.9" y="904.0" font-size="16" font-weight="bold" fill="#f4f4f4" textLength="80.7" lengthAdjust="spacingAndGlyphs">More Data</text>
<text x="100.3" y="25.0" font-size="22.5" font-weight="bold" fill="#f8f8f8" text-anchor="middle" textLength="87.0" lengthAdjust="spacingAndGlyphs">21IP296</text>
<text x="100.5" y="46.4" font-size="17.5" font-weight="bold" fill="#eef2fa" text-anchor="middle" textLength="90.6" lengthAdjust="spacingAndGlyphs">Blending 1</text>
<polygon points="55,102.5 84,117 55,131.5" fill="#6cbf4a" stroke="#f4f4f4" stroke-width="2"/>
<g transform="translate(0,0)"><path d="M9.5 79 L9.5 66.5 Q9.5 64 11.8 64 Q14.2 64 14.2 66.5 L14.2 74 L14.2 60.5 Q14.2 58.3 16.9 58.3 Q19.6 58.3 19.6 60.5 L19.6 73 L19.6 59 Q19.6 56.7 22.3 56.7 Q25 56.7 25 59 L25 73 L25 62.2 Q25 60 27.6 60 Q30.2 60 30.2 62.2 L30.2 78 L37.5 70.5 Q39.5 69 41 70.5 Q42.3 72 41 74 L32 86 Q28 90.5 21 90.5 Q9.5 90.5 9.5 79 Z" fill="none" stroke="#f4f4f4" stroke-width="1.8" stroke-linejoin="round"/><path d="M64.33 61.87 L65.75 57.68 L73.65 57.68 L75.07 61.87 L77.17 63.08 L81.51 62.22 L85.46 69.07 L82.54 72.39 L82.54 74.81 L85.46 78.13 L81.51 84.98 L77.17 84.12 L75.07 85.33 L73.65 89.52 L65.75 89.52 L64.33 85.33 L62.23 84.12 L57.89 84.98 L53.94 78.13 L56.86 74.81 L56.86 72.39 L53.94 69.07 L57.89 62.22 L62.23 63.08 Z" fill="none" stroke="#f4f4f4" stroke-width="1.5" stroke-linejoin="round"/><circle cx="69.6" cy="73.5" r="10.6" fill="none" stroke="#f4f4f4" stroke-width="1.6"/><polygon points="66.2,68.2 76.6,73.6 66.2,79.1" fill="none" stroke="#f4f4f4" stroke-width="1.5" stroke-linejoin="round"/><polygon points="123,74.6 134.7,67.5 140.5,80.4 149.7,64.6 160.5,53.3 163.4,53.75 163.8,67.5 139.7,94.2" fill="#6cbf4a" stroke="#f4f4f4" stroke-width="1.8" stroke-linejoin="miter"/><circle cx="110" cy="114.2" r="16.2" fill="#6cbf4a" stroke="#ececec" stroke-width="3"/><line x1="97.5" y1="128" x2="119.5" y2="106" stroke="#666666" stroke-width="4.6" stroke-linecap="round"/><path d="M107 118.5 L118 107.5" stroke="#ffffff" stroke-width="2.4" stroke-linecap="round"/><polygon points="178.8,101 161.9,134 195.7,134" fill="#6cbf4a" stroke="#f4f4f4" stroke-width="2" stroke-linejoin="miter"/><polygon points="179.3,108.8 182.8,108.8 180.2,118.6 183.6,117.6 180.6,127.4 182.6,127.4 178.6,133.6 176.4,127 178.4,127.2 179.6,121.8 175.6,123" fill="#6cbf4a" stroke="#f4f4f4" stroke-width="1.4" stroke-linejoin="miter"/></g>
<text x="100.5" y="156.4" font-size="17.5" font-weight="bold" fill="#eef2fa" text-anchor="middle" textLength="90.6" lengthAdjust="spacingAndGlyphs">Blending 3</text>
<polygon points="55,212.5 84,227 55,241.5" fill="#6cbf4a" stroke="#f4f4f4" stroke-width="2"/>
<g transform="translate(0,110)"><path d="M9.5 79 L9.5 66.5 Q9.5 64 11.8 64 Q14.2 64 14.2 66.5 L14.2 74 L14.2 60.5 Q14.2 58.3 16.9 58.3 Q19.6 58.3 19.6 60.5 L19.6 73 L19.6 59 Q19.6 56.7 22.3 56.7 Q25 56.7 25 59 L25 73 L25 62.2 Q25 60 27.6 60 Q30.2 60 30.2 62.2 L30.2 78 L37.5 70.5 Q39.5 69 41 70.5 Q42.3 72 41 74 L32 86 Q28 90.5 21 90.5 Q9.5 90.5 9.5 79 Z" fill="none" stroke="#f4f4f4" stroke-width="1.8" stroke-linejoin="round"/><path d="M64.33 61.87 L65.75 57.68 L73.65 57.68 L75.07 61.87 L77.17 63.08 L81.51 62.22 L85.46 69.07 L82.54 72.39 L82.54 74.81 L85.46 78.13 L81.51 84.98 L77.17 84.12 L75.07 85.33 L73.65 89.52 L65.75 89.52 L64.33 85.33 L62.23 84.12 L57.89 84.98 L53.94 78.13 L56.86 74.81 L56.86 72.39 L53.94 69.07 L57.89 62.22 L62.23 63.08 Z" fill="none" stroke="#f4f4f4" stroke-width="1.5" stroke-linejoin="round"/><circle cx="69.6" cy="73.5" r="10.6" fill="none" stroke="#f4f4f4" stroke-width="1.6"/><polygon points="66.2,68.2 76.6,73.6 66.2,79.1" fill="none" stroke="#f4f4f4" stroke-width="1.5" stroke-linejoin="round"/><g transform="translate(0,-110)"><path d="M129.3 190 A14.6 14.6 0 1 1 143 197.3" fill="none" stroke="#f4f4f4" stroke-width="7.5" stroke-linecap="round"/><polygon points="130.2,198.3 141.5,191.7 141.5,204.8" fill="#d97a00" stroke="#f4f4f4" stroke-width="1.5" stroke-linejoin="round"/><path d="M129.3 190 A14.6 14.6 0 1 1 143 197.3" fill="none" stroke="#e07f00" stroke-width="4.5" stroke-linecap="round"/><polygon points="131.5,198.3 140.5,193.2 140.5,203.4" fill="#e07f00"/></g><circle cx="110" cy="114.2" r="16.2" fill="#6cbf4a" stroke="#ececec" stroke-width="3"/><line x1="97.5" y1="128" x2="119.5" y2="106" stroke="#666666" stroke-width="4.6" stroke-linecap="round"/><path d="M107 118.5 L118 107.5" stroke="#ffffff" stroke-width="2.4" stroke-linecap="round"/><polygon points="178.8,101 161.9,134 195.7,134" fill="#6cbf4a" stroke="#f4f4f4" stroke-width="2" stroke-linejoin="miter"/><polygon points="179.3,108.8 182.8,108.8 180.2,118.6 183.6,117.6 180.6,127.4 182.6,127.4 178.6,133.6 176.4,127 178.4,127.2 179.6,121.8 175.6,123" fill="#6cbf4a" stroke="#f4f4f4" stroke-width="1.4" stroke-linejoin="miter"/></g>
<text x="100.5" y="266.4" font-size="17.5" font-weight="bold" fill="#eef2fa" text-anchor="middle" textLength="136.6" lengthAdjust="spacingAndGlyphs">Cooling System</text>
<polygon points="55,322.5 84,337 55,351.5" fill="#6cbf4a" stroke="#f4f4f4" stroke-width="2"/>
<g transform="translate(0,220)"><path d="M9.5 79 L9.5 66.5 Q9.5 64 11.8 64 Q14.2 64 14.2 66.5 L14.2 74 L14.2 60.5 Q14.2 58.3 16.9 58.3 Q19.6 58.3 19.6 60.5 L19.6 73 L19.6 59 Q19.6 56.7 22.3 56.7 Q25 56.7 25 59 L25 73 L25 62.2 Q25 60 27.6 60 Q30.2 60 30.2 62.2 L30.2 78 L37.5 70.5 Q39.5 69 41 70.5 Q42.3 72 41 74 L32 86 Q28 90.5 21 90.5 Q9.5 90.5 9.5 79 Z" fill="none" stroke="#f4f4f4" stroke-width="1.8" stroke-linejoin="round"/><path d="M64.33 61.87 L65.75 57.68 L73.65 57.68 L75.07 61.87 L77.17 63.08 L81.51 62.22 L85.46 69.07 L82.54 72.39 L82.54 74.81 L85.46 78.13 L81.51 84.98 L77.17 84.12 L75.07 85.33 L73.65 89.52 L65.75 89.52 L64.33 85.33 L62.23 84.12 L57.89 84.98 L53.94 78.13 L56.86 74.81 L56.86 72.39 L53.94 69.07 L57.89 62.22 L62.23 63.08 Z" fill="none" stroke="#f4f4f4" stroke-width="1.5" stroke-linejoin="round"/><circle cx="69.6" cy="73.5" r="10.6" fill="none" stroke="#f4f4f4" stroke-width="1.6"/><polygon points="66.2,68.2 76.6,73.6 66.2,79.1" fill="none" stroke="#f4f4f4" stroke-width="1.5" stroke-linejoin="round"/><polygon points="123,74.6 134.7,67.5 140.5,80.4 149.7,64.6 160.5,53.3 163.4,53.75 163.8,67.5 139.7,94.2" fill="#6cbf4a" stroke="#f4f4f4" stroke-width="1.8" stroke-linejoin="miter"/><circle cx="110" cy="114.2" r="16.2" fill="#6cbf4a" stroke="#ececec" stroke-width="3"/><line x1="97.5" y1="128" x2="119.5" y2="106" stroke="#666666" stroke-width="4.6" stroke-linecap="round"/><path d="M107 118.5 L118 107.5" stroke="#ffffff" stroke-width="2.4" stroke-linecap="round"/><polygon points="178.8,101 161.9,134 195.7,134" fill="#6cbf4a" stroke="#f4f4f4" stroke-width="2" stroke-linejoin="miter"/><polygon points="179.3,108.8 182.8,108.8 180.2,118.6 183.6,117.6 180.6,127.4 182.6,127.4 178.6,133.6 176.4,127 178.4,127.2 179.6,121.8 175.6,123" fill="#6cbf4a" stroke="#f4f4f4" stroke-width="1.4" stroke-linejoin="miter"/></g>
<text x="283.4" y="42.0" font-size="16" font-weight="normal" fill="#f4f4f4" text-anchor="start" textLength="61.4" lengthAdjust="spacingAndGlyphs">Synoptic</text>
<text x="450.7" y="42.2" font-size="16" font-weight="normal" fill="#f4f4f4" text-anchor="start" textLength="46.9" lengthAdjust="spacingAndGlyphs">Recipe</text>
<text x="606.7" y="41.9" font-size="16" font-weight="normal" fill="#f4f4f4" text-anchor="start" textLength="54.1" lengthAdjust="spacingAndGlyphs">Reports</text>
<text x="768.0" y="42.0" font-size="16" font-weight="normal" fill="#f4f4f4" text-anchor="start" textLength="51.4" lengthAdjust="spacingAndGlyphs">Config.</text>
<text x="923.0" y="41.6" font-size="16" font-weight="normal" fill="#f4f4f4" text-anchor="start" textLength="61.2" lengthAdjust="spacingAndGlyphs">Blending</text>
<text x="243.0" y="97.8" font-size="16" font-weight="normal" fill="#f4f4f4" text-anchor="start" textLength="75.4" lengthAdjust="spacingAndGlyphs">Production</text>
<text x="402.3" y="98.3" font-size="16" font-weight="normal" fill="#f4f4f4" text-anchor="start" textLength="55.4" lengthAdjust="spacingAndGlyphs">Storage</text>
<text x="562.7" y="97.8" font-size="16" font-weight="normal" fill="#f4f4f4" text-anchor="start" textLength="49.9" lengthAdjust="spacingAndGlyphs">Dosing</text>
<text x="723.0" y="98.0" font-size="16" font-weight="normal" fill="#f4f4f4" text-anchor="start" textLength="79.4" lengthAdjust="spacingAndGlyphs">Distaccante</text>
<text x="882.9" y="98.0" font-size="16" font-weight="normal" fill="#f4f4f4" text-anchor="start" textLength="51.7" lengthAdjust="spacingAndGlyphs">Manual</text>
<text x="1042.2" y="98.0" font-size="16" font-weight="normal" fill="#f4f4f4" text-anchor="start" textLength="60.4" lengthAdjust="spacingAndGlyphs">Auxiliary</text>
<rect x="214" y="12" width="45" height="33.5" fill="none" stroke="#f2f2f2" stroke-width="2"/><polygon points="224,46.5 229,46.5 227,60.5 222,60.5" fill="none" stroke="#f2f2f2" stroke-width="1.6" stroke-linejoin="round"/><polygon points="244,46.5 249,46.5 251,60.5 246,60.5" fill="none" stroke="#f2f2f2" stroke-width="1.6" stroke-linejoin="round"/><line x1="228.5" y1="49.2" x2="244.5" y2="49.2" fill="none" stroke="#f2f2f2" stroke-width="1.5"/><path d="M228.90 89.38 L232.23 89.89 L232.23 92.31 L228.90 92.82 L227.95 95.12 L229.94 97.84 L228.24 99.54 L225.52 97.55 L223.22 98.50 L222.71 101.83 L220.29 101.83 L219.78 98.50 L217.48 97.55 L214.76 99.54 L213.06 97.84 L215.05 95.12 L214.10 92.82 L210.77 92.31 L210.77 89.89 L214.10 89.38 L215.05 87.08 L213.06 84.36 L214.76 82.66 L217.48 84.65 L219.78 83.70 L220.29 80.37 L222.71 80.37 L223.22 83.70 L225.52 84.65 L228.24 82.66 L229.94 84.36 L227.95 87.08 Z" fill="none" stroke="#f2f2f2" stroke-width="1.4" stroke-linejoin="round"/><circle cx="221.5" cy="91.1" r="4.6" fill="none" stroke="#f2f2f2" stroke-width="1.4"/><path d="M221.8 75.6 A15.5 15.5 0 0 1 232 102.2" fill="none" stroke="#f2f2f2" stroke-width="1.5"/><path d="M221.2 106.6 A15.5 15.5 0 0 1 210.8 79.8" fill="none" stroke="#f2f2f2" stroke-width="1.5"/><polygon points="212.7,78.2 208.8,79.6 211.6,82.4" fill="#f2f2f2" stroke="#f2f2f2" stroke-width="0.8"/><polygon points="230.3,103.8 234.2,102.4 231.4,99.6" fill="#f2f2f2" stroke="#f2f2f2" stroke-width="0.8"/><path d="M374.5 20 Q385 16 396 21 Q407 16 418.5 20.5 L418.5 48 Q407 44.5 396 49 Q385 44.5 374.5 48 Z" fill="none" stroke="#f2f2f2" stroke-width="1.8" stroke-linejoin="round"/><path d="M396 21 L396 49" fill="none" stroke="#f2f2f2" stroke-width="1.6"/><path d="M374.5 31 Q385 27 396 31.5 Q407 27 418.5 31.5" fill="none" stroke="#f2f2f2" stroke-width="1.6"/><path d="M374.5 39.5 Q385 35.5 396 40 Q407 35.5 418.5 40" fill="none" stroke="#f2f2f2" stroke-width="1.6"/><path d="M371 24.5 L371 52 L392 52 L396 55 L400 52 L423 52 L423 24.5" fill="none" stroke="#f2f2f2" stroke-width="1.8" stroke-linejoin="round"/><path d="M409 20 L409 31 L411.5 28.5 L414 31 L414 20.5" fill="none" stroke="#f2f2f2" stroke-width="1.5"/><path d="M406.5 38 L406.5 47" fill="none" stroke="#f2f2f2" stroke-width="1.5"/><path d="M534.3 13.2 L534.3 62.9 L574 62.9" fill="none" stroke="#f2f2f2" stroke-width="2.2"/><path d="M540 9.6 L567.5 9.6 L579.5 20.4 L579.5 56.9 L540 56.9 Z" fill="none" stroke="#f2f2f2" stroke-width="2.2" stroke-linejoin="round"/><path d="M567.5 9.6 L567.5 20.4 L579.5 20.4" fill="none" stroke="#f2f2f2" stroke-width="2"/><line x1="546.6" y1="29.3" x2="572.3" y2="29.3" fill="none" stroke="#f2f2f2" stroke-width="2.2"/><line x1="546.6" y1="38.6" x2="572.3" y2="38.6" fill="none" stroke="#f2f2f2" stroke-width="2.2"/><line x1="546.6" y1="47.9" x2="572.3" y2="47.9" fill="none" stroke="#f2f2f2" stroke-width="2.2"/><path d="M721.90 23.04 L726.91 24.17 L726.91 27.83 L721.90 28.96 L719.80 34.02 L722.55 38.37 L719.97 40.95 L715.62 38.20 L710.56 40.30 L709.43 45.31 L705.77 45.31 L704.64 40.30 L699.58 38.20 L695.23 40.95 L692.65 38.37 L695.40 34.02 L693.30 28.96 L688.29 27.83 L688.29 24.17 L693.30 23.04 L695.40 17.98 L692.65 13.63 L695.23 11.05 L699.58 13.80 L704.64 11.70 L705.77 6.69 L709.43 6.69 L710.56 11.70 L715.62 13.80 L719.97 11.05 L722.55 13.63 L719.80 17.98 Z" fill="none" stroke="#f2f2f2" stroke-width="2.3" stroke-linejoin="round"/><circle cx="707.6" cy="26" r="7.9" fill="none" stroke="#f2f2f2" stroke-width="2.3"/><path d="M733.48 40.94 L735.35 38.30 L737.74 39.29 L737.19 42.47 L739.43 44.71 L742.61 44.16 L743.60 46.55 L740.96 48.42 L740.96 51.58 L743.60 53.45 L742.61 55.84 L739.43 55.29 L737.19 57.53 L737.74 60.71 L735.35 61.70 L733.48 59.06 L730.32 59.06 L728.45 61.70 L726.06 60.71 L726.61 57.53 L724.37 55.29 L721.19 55.84 L720.20 53.45 L722.84 51.58 L722.84 48.42 L720.20 46.55 L721.19 44.16 L724.37 44.71 L726.61 42.47 L726.06 39.29 L728.45 38.30 L730.32 40.94 Z" fill="none" stroke="#f2f2f2" stroke-width="2" stroke-linejoin="round"/><circle cx="731.9" cy="50" r="5.3" fill="none" stroke="#f2f2f2" stroke-width="2"/><rect x="857.5" y="25" width="8" height="16" rx="1" fill="none" stroke="#f2f2f2" stroke-width="1.3"/><path d="M865.5 37.5 L889.5 37.5 L891 39.3" fill="none" stroke="#f2f2f2" stroke-width="1.3"/><path d="M858.5 46 L883.5 46" fill="none" stroke="#f2f2f2" stroke-width="1.3"/><rect x="849.5" y="38.5" width="5" height="6" fill="none" stroke="#f2f2f2" stroke-width="1.3"/><rect x="855" y="37.2" width="3.5" height="10" rx="1" fill="none" stroke="#f2f2f2" stroke-width="1.3"/><rect x="883.5" y="39.5" width="11" height="8.5" rx="2" fill="none" stroke="#f2f2f2" stroke-width="1.3"/><rect x="897" y="37.2" width="3.5" height="11" rx="1" fill="none" stroke="#f2f2f2" stroke-width="1.3"/><rect x="894.5" y="41" width="2.5" height="3.5" fill="none" stroke="#f2f2f2" stroke-width="1.3"/><rect x="900.5" y="41" width="3" height="3.5" fill="none" stroke="#f2f2f2" stroke-width="1.3"/><path d="M363.5 107 L363.5 86.5 Q369.5 84 375.6 85" fill="none" stroke="#f2f2f2" stroke-width="1.6"/><path d="M376.5 107 L376.5 80.5 Q388 77.5 399.3 80.5 L399.3 107" fill="none" stroke="#f2f2f2" stroke-width="1.6"/><line x1="362" y1="107.3" x2="401.7" y2="107.3" fill="none" stroke="#f2f2f2" stroke-width="1.8"/><line x1="381.2" y1="79.5" x2="381.2" y2="107" fill="none" stroke="#f2f2f2" stroke-width="1.3"/><line x1="386.2" y1="79" x2="386.2" y2="107" fill="none" stroke="#f2f2f2" stroke-width="1.3"/><line x1="381.2" y1="83.0" x2="386.2" y2="83.0" fill="none" stroke="#f2f2f2" stroke-width="1"/><line x1="381.2" y1="86.6" x2="386.2" y2="86.6" fill="none" stroke="#f2f2f2" stroke-width="1"/><line x1="381.2" y1="90.2" x2="386.2" y2="90.2" fill="none" stroke="#f2f2f2" stroke-width="1"/><line x1="381.2" y1="93.8" x2="386.2" y2="93.8" fill="none" stroke="#f2f2f2" stroke-width="1"/><line x1="381.2" y1="97.4" x2="386.2" y2="97.4" fill="none" stroke="#f2f2f2" stroke-width="1"/><line x1="381.2" y1="101.0" x2="386.2" y2="101.0" fill="none" stroke="#f2f2f2" stroke-width="1"/><line x1="381.2" y1="104.6" x2="386.2" y2="104.6" fill="none" stroke="#f2f2f2" stroke-width="1"/><rect x="528.5" y="91" width="7" height="16" fill="#a6a6a6"/><rect x="525.5" y="77.2" width="11.5" height="30.3" rx="0.8" fill="none" stroke="#f2f2f2" stroke-width="1.5"/><line x1="534.3" y1="78.5" x2="534.3" y2="106.5" stroke="#d8d8d8" stroke-width="1.2"/><line x1="526.5" y1="84.5" x2="530.5" y2="84.5" fill="none" stroke="#f2f2f2" stroke-width="1.1"/><line x1="526.5" y1="87.7" x2="532.5" y2="87.7" fill="none" stroke="#f2f2f2" stroke-width="1.1"/><line x1="526.5" y1="90.8" x2="530.5" y2="90.8" fill="none" stroke="#f2f2f2" stroke-width="1.1"/><line x1="526.5" y1="94" x2="532.5" y2="94" fill="none" stroke="#f2f2f2" stroke-width="1.1"/><line x1="526.5" y1="97.2" x2="530.5" y2="97.2" fill="none" stroke="#f2f2f2" stroke-width="1.1"/><line x1="526.5" y1="100.3" x2="532.5" y2="100.3" fill="none" stroke="#f2f2f2" stroke-width="1.1"/><rect x="551.3" y="91" width="7" height="16" fill="#a6a6a6"/><rect x="548.3" y="77.2" width="11.5" height="30.3" rx="0.8" fill="none" stroke="#f2f2f2" stroke-width="1.5"/><line x1="557.0999999999999" y1="78.5" x2="557.0999999999999" y2="106.5" stroke="#d8d8d8" stroke-width="1.2"/><line x1="549.3" y1="84.5" x2="553.3" y2="84.5" fill="none" stroke="#f2f2f2" stroke-width="1.1"/><line x1="549.3" y1="87.7" x2="555.3" y2="87.7" fill="none" stroke="#f2f2f2" stroke-width="1.1"/><line x1="549.3" y1="90.8" x2="553.3" y2="90.8" fill="none" stroke="#f2f2f2" stroke-width="1.1"/><line x1="549.3" y1="94" x2="555.3" y2="94" fill="none" stroke="#f2f2f2" stroke-width="1.1"/><line x1="549.3" y1="97.2" x2="553.3" y2="97.2" fill="none" stroke="#f2f2f2" stroke-width="1.1"/><line x1="549.3" y1="100.3" x2="555.3" y2="100.3" fill="none" stroke="#f2f2f2" stroke-width="1.1"/><rect x="700.5" y="73.5" width="10" height="3.5" rx="1" fill="none" stroke="#f2f2f2" stroke-width="1.3"/><rect x="699" y="77" width="13" height="24.5" rx="1.5" fill="none" stroke="#f2f2f2" stroke-width="1.3"/><path d="M698.8 83.5 L693.8 87.8 L698.8 92.5" fill="none" stroke="#f2f2f2" stroke-width="1.3"/><rect x="702.5" y="101.5" width="6" height="3.5" fill="none" stroke="#f2f2f2" stroke-width="1.2"/><path d="M703.5 106 L696 113 M705.5 106 L705.5 113 M707.5 106 L714.5 113" fill="none" stroke="#f2f2f2" stroke-width="1"/><path d="M848.8 92 Q849.5 91.4 851.2 91.6 L854.7 94 L855.6 78.5 Q855.7 77.8 856.4 77.8 L859.3 77.8 Q860 77.8 860 78.5 L860.7 90.8 L861.7 90.8 L862.3 75.4 Q862.3 74.7 863 74.7 L866.2 74.7 Q866.9 74.7 866.9 75.4 L866.9 90.8 L868.3 90.8 L868.9 76.7 Q868.9 76 869.6 76 L872.3 76 Q873 76 873 76.7 L873.4 92.8 L874.1 92.8 L874.9 83.4 Q874.9 82.7 875.6 82.7 L877.5 82.7 Q878.2 82.7 878.2 83.4 L878.2 99.8 L874.9 106.8 L874.9 110.3 L857.8 110.3 L857.8 106.4 L848.4 94.3 Q848 93 848.8 92 Z" fill="none" stroke="#f2f2f2" stroke-width="1.4" stroke-linejoin="round"/><polygon points="1021,73.5 1001.2,111.5 1040.8,111.5" fill="none" stroke="#f2f2f2" stroke-width="1.8" stroke-linejoin="miter"/><path d="M1022.5 86.5 L1018.5 95.5 L1023 95 L1019.5 104" fill="none" stroke="#f2f2f2" stroke-width="1.5"/><polygon points="1017,101.5 1019,106 1021.5,102.5" fill="#f2f2f2"/>
<circle cx="1590.4" cy="33.8" r="20.2" fill="none" stroke="#ececec" stroke-width="1.2"/><path d="M1600.87 34.62 L1603.39 36.65 L1601.60 40.97 L1598.38 40.62 L1597.22 41.78 L1597.57 45.00 L1593.25 46.79 L1591.22 44.27 L1589.58 44.27 L1587.55 46.79 L1583.23 45.00 L1583.58 41.78 L1582.42 40.62 L1579.20 40.97 L1577.41 36.65 L1579.93 34.62 L1579.93 32.98 L1577.41 30.95 L1579.20 26.63 L1582.42 26.98 L1583.58 25.82 L1583.23 22.60 L1587.55 20.81 L1589.58 23.33 L1591.22 23.33 L1593.25 20.81 L1597.57 22.60 L1597.22 25.82 L1598.38 26.98 L1601.60 26.63 L1603.39 30.95 L1600.87 32.98 Z" fill="none" stroke="#dcdcdc" stroke-width="1.6" stroke-linejoin="round"/><circle cx="1590.4" cy="33.8" r="6" fill="none" stroke="#dcdcdc" stroke-width="1.6"/><circle cx="1640.8" cy="33.8" r="20.6" fill="#6cbf4a" stroke="#ececec" stroke-width="1"/><path d="M1630.6 35 A11.5 11.5 0 0 1 1642 46.3" fill="none" stroke="#fff" stroke-width="2.3" stroke-linecap="round"/><path d="M1630.6 24 A22.5 22.5 0 0 1 1653.3 46.3" fill="none" stroke="#fff" stroke-width="2.3" stroke-linecap="round"/><polygon points="1631.4,43.6 1633.3,45.5 1631.4,47.4 1629.5,45.5" fill="none" stroke="#fff" stroke-width="1"/><circle cx="1691.6" cy="33.8" r="20.4" fill="none" stroke="#ececec" stroke-width="1.8"/><path d="M1680.6 22.5 L1680.6 45.9 L1703.3 45.9" fill="none" stroke="#f4f4f4" stroke-width="2.2"/><path d="M1680.8 44 L1685.3 32.6 L1693.1 39.25 L1703.3 28.3" fill="none" stroke="#f4f4f4" stroke-width="2.2" stroke-linejoin="round"/><circle cx="1741.7" cy="34.2" r="20.2" fill="none" stroke="#ececec" stroke-width="1.2"/><path d="M1735.5 26.5 Q1736 21 1742 21 Q1748.5 21 1748.5 26.5 Q1748.5 30 1744.5 32.5 Q1741.5 34.5 1741.5 37.5 L1741.5 39" fill="none" stroke="#f4f4f4" stroke-width="3"/><circle cx="1741.5" cy="43.3" r="2.3" fill="#f4f4f4"/><circle cx="1792.4" cy="34.2" r="20.2" fill="none" stroke="#ececec" stroke-width="1.2"/><path d="M1782.0 40.8 Q1786.0 38.3 1786.0 33.8 L1786.0 31.0 Q1786.0 25.5 1792.3 25.5 Q1798.6 25.5 1798.6 31.0 L1798.6 33.8 Q1798.6 38.3 1802.6 40.8 Z" fill="none" stroke="#f4f4f4" stroke-width="2.6" stroke-linejoin="round"/><path d="M1789.5 42.8 L1795.1 42.8 Q1795.1 46.8 1792.3 46.8 Q1789.5 46.8 1789.5 42.8 Z" fill="#f4f4f4"/><path d="M1781.8 29.0 Q1782.8 23.0 1789.8 22.3" fill="none" stroke="#f4f4f4" stroke-width="2.47" stroke-linecap="round"/><path d="M1802.8 29.0 Q1801.8 23.0 1794.8 22.3" fill="none" stroke="#f4f4f4" stroke-width="2.47" stroke-linecap="round"/><circle cx="1842.6" cy="34" r="19.2" fill="#e8e9e6"/><circle cx="1893.3" cy="34.2" r="20.2" fill="none" stroke="#ececec" stroke-width="1.2"/><path d="M1884.3 28 L1884.3 21.5 Q1884.3 20.8 1885 20.8 L1903.3 20.8 Q1904 20.8 1904 21.5 L1904 47.9 Q1904 48.6 1903.3 48.6 L1885 48.6 Q1884.3 48.6 1884.3 47.9 L1884.3 41.5" fill="none" stroke="#e6e6e6" stroke-width="1.6"/><path d="M1878 32.6 L1887.5 32.6 L1887.5 28.8 L1893.6 34.8 L1887.5 40.8 L1887.5 37 L1878 37 Z" fill="#e6e6e6"/><circle cx="1899.5" cy="34.8" r="1.5" fill="#e6e6e6"/>
<path d="M1848.3 29.3 Q1846.5 27.9 1844 27.9 Q1837.3 27.9 1837.3 35.5 Q1837.3 43.1 1844 43.1 Q1846.6 43.1 1848.5 42" fill="none" stroke="#1e2a50" stroke-width="1.5"/>
<path d="M368.8 942.8 L375.8 942.8 L372.3 948.8 Z" fill="none" stroke="#9a9a9a" stroke-width="0.9"/><path d="M371.5 948.5 L375.5 942.5" stroke="#ffffff" stroke-width="1.2"/>
<text x="206.0" y="951.6" font-size="16" font-weight="normal" fill="#f4f4f4" text-anchor="start" textLength="35.4" lengthAdjust="spacingAndGlyphs">Time</text>
<text x="386.0" y="951.6" font-size="16" font-weight="normal" fill="#f4f4f4" text-anchor="start" textLength="65.4" lengthAdjust="spacingAndGlyphs">Tagname</text>
<text x="636.0" y="951.6" font-size="16" font-weight="normal" fill="#f4f4f4" text-anchor="start" textLength="80.4" lengthAdjust="spacingAndGlyphs">Description</text>
<text x="206.0" y="981.0" font-size="16" font-weight="normal" fill="#f01414" text-anchor="start" textLength="128.4" lengthAdjust="spacingAndGlyphs">24/08/2023 10:10</text>
<text x="385.0" y="981.0" font-size="16" font-weight="normal" fill="#f01414" text-anchor="start" textLength="241.4" lengthAdjust="spacingAndGlyphs">HDF_Anl_ScrMxLoad_Sta_Hw_Al...</text>
<text x="635.0" y="981.0" font-size="16" font-weight="normal" fill="#f01414" text-anchor="start" textLength="602.4" lengthAdjust="spacingAndGlyphs">2421 - DOSING FEEDING - FEEDING SCREWS MAXIMUM LOAD : HARDWARE ALARM</text>
<text x="206.0" y="1008.0" font-size="16" font-weight="normal" fill="#f01414" text-anchor="start" textLength="128.4" lengthAdjust="spacingAndGlyphs">24/08/2023 10:10</text>
<text x="385.0" y="1008.0" font-size="16" font-weight="normal" fill="#f01414" text-anchor="start" textLength="233.4" lengthAdjust="spacingAndGlyphs">HDF_Anl_ScrMxLoad_Sta_Mx1_...</text>
<text x="635.0" y="1008.0" font-size="16" font-weight="normal" fill="#f01414" text-anchor="start" textLength="561.4" lengthAdjust="spacingAndGlyphs">2421 - DOSING FEEDING - FEEDING SCREWS MAXIMUM LOAD : MAX ALARM 1</text>
<text x="206.0" y="1035.0" font-size="16" font-weight="normal" fill="#f01414" text-anchor="start" textLength="128.4" lengthAdjust="spacingAndGlyphs">24/08/2023 10:10</text>
<text x="385.0" y="1035.0" font-size="16" font-weight="normal" fill="#f01414" text-anchor="start" textLength="235.4" lengthAdjust="spacingAndGlyphs">HDF_Anl_ScrMxLoad_Sta_Mn1_...</text>
<text x="635.0" y="1035.0" font-size="16" font-weight="normal" fill="#f01414" text-anchor="start" textLength="557.4" lengthAdjust="spacingAndGlyphs">2421 - DOSING FEEDING - FEEDING SCREWS MAXIMUM LOAD : MIN ALARM 1</text>
<rect x="1691.5" y="977.5" width="190" height="50" rx="25" fill="none" stroke="#efefef" stroke-width="1.1"/><path d="M1711.2 1009.8 Q1715.2 1007.3 1715.2 1002.8 L1715.2 999.0 Q1715.2 993.5 1721.5 993.5 Q1727.8 993.5 1727.8 999.0 L1727.8 1002.8 Q1727.8 1007.3 1731.8 1009.8 Z" fill="none" stroke="#f4f4f4" stroke-width="2.8" stroke-linejoin="round"/><path d="M1718.7 1011.8 L1724.3 1011.8 Q1724.3 1015.8 1721.5 1015.8 Q1718.7 1015.8 1718.7 1011.8 Z" fill="#f4f4f4"/><path d="M1711.0 997.0 Q1712.0 991.0 1719.0 990.3" fill="none" stroke="#f4f4f4" stroke-width="2.66" stroke-linecap="round"/><path d="M1732.0 997.0 Q1731.0 991.0 1724.0 990.3" fill="none" stroke="#f4f4f4" stroke-width="2.66" stroke-linecap="round"/><path d="M1741.1000000000001 1009.8 Q1745.1000000000001 1007.3 1745.1000000000001 1002.8 L1745.1000000000001 999.0 Q1745.1000000000001 993.5 1751.4 993.5 Q1757.7 993.5 1757.7 999.0 L1757.7 1002.8 Q1757.7 1007.3 1761.7 1009.8 Z" fill="none" stroke="#f4f4f4" stroke-width="2.8" stroke-linejoin="round"/><path d="M1748.6000000000001 1011.8 L1754.2 1011.8 Q1754.2 1015.8 1751.4 1015.8 Q1748.6000000000001 1015.8 1748.6000000000001 1011.8 Z" fill="#f4f4f4"/><path d="M1740.9 997.0 Q1741.9 991.0 1748.9 990.3" fill="none" stroke="#f4f4f4" stroke-width="2.66" stroke-linecap="round"/><path d="M1761.9 997.0 Q1760.9 991.0 1753.9 990.3" fill="none" stroke="#f4f4f4" stroke-width="2.66" stroke-linecap="round"/><path d="M1771.1000000000001 1009.8 Q1775.1000000000001 1007.3 1775.1000000000001 1002.8 L1775.1000000000001 999.0 Q1775.1000000000001 993.5 1781.4 993.5 Q1787.7 993.5 1787.7 999.0 L1787.7 1002.8 Q1787.7 1007.3 1791.7 1009.8 Z" fill="none" stroke="#f4f4f4" stroke-width="2.8" stroke-linejoin="round"/><path d="M1778.6000000000001 1011.8 L1784.2 1011.8 Q1784.2 1015.8 1781.4 1015.8 Q1778.6000000000001 1015.8 1778.6000000000001 1011.8 Z" fill="#f4f4f4"/><path d="M1770.9 997.0 Q1771.9 991.0 1778.9 990.3" fill="none" stroke="#f4f4f4" stroke-width="2.66" stroke-linecap="round"/><path d="M1791.9 997.0 Q1790.9 991.0 1783.9 990.3" fill="none" stroke="#f4f4f4" stroke-width="2.66" stroke-linecap="round"/><path d="M1801 1003 L1811 1013 L1822.5 993" fill="none" stroke="#f4f4f4" stroke-width="3"/><path d="M1821 1003 L1831 1013 L1842.5 993" fill="none" stroke="#f4f4f4" stroke-width="3"/><path d="M1841 1003 L1851 1013 L1862.5 993" fill="none" stroke="#f4f4f4" stroke-width="3"/>
<text x="1851.5" y="1053.0" font-size="15.5" font-weight="normal" fill="#f0f0f0" text-anchor="start" textLength="40.0" lengthAdjust="spacingAndGlyphs">11:54</text>
<text x="1829.1" y="1073.0" font-size="15.5" font-weight="normal" fill="#f0f0f0" text-anchor="start" textLength="83.1" lengthAdjust="spacingAndGlyphs">24/08/2023</text>
<rect x="12" y="1019" width="177.6" height="80" rx="11" fill="#ffffff"/><rect x="29.35" y="1021.1" width="13.5" height="6.7" fill="#007236"/><polygon points="29.35,1030 64.8,1030 67.2,1050.9 70.05,1030 92.05,1030 92.05,1057.7 78.1,1057.7 77.8,1036.8 77.2,1036.8 74.85,1057.7 59.8,1057.7 57.3,1036.8 56.6,1036.8 55.9,1057.7 29.35,1057.7" fill="#007236"/><path d="M95.35 1057.5 L99.9 1029.8 L123.1 1029.8 L127.7 1057.5 L113.9 1057.5 L112.4 1050 L109.6 1050 L108.3 1057.5 Z M110.4 1037 L112.4 1037 L113.2 1048.4 L109.4 1048.4 Z" fill="#007236" fill-rule="evenodd"/><polygon points="130.75,1029.8 144.8,1029.8 144.8,1050 156.7,1050 156.7,1057.5 130.75,1057.5" fill="#007236"/><path d="M162.5 1050.2 L162.5 1075.4 M162.3 1061.5 L173.5 1061.5" stroke="#007236" stroke-width="1.4" fill="none"/><path d="M149.1 1063 L163.2 1063 L163.2 1075.4 L161.2 1075.4 Q160.5 1064.8 149.1 1064.3 Z" fill="#007236"/><text x="58.9" y="1078.6" font-family="Liberation Sans" font-weight="bold" font-size="12.8" fill="#111111" textLength="56" lengthAdjust="spacingAndGlyphs">IMALPAL</text><text x="116.5" y="1078.6" font-family="Liberation Sans" font-size="12.8" fill="#808080" textLength="38.5" lengthAdjust="spacingAndGlyphs">GROUP</text>
</svg>
</body></html>
